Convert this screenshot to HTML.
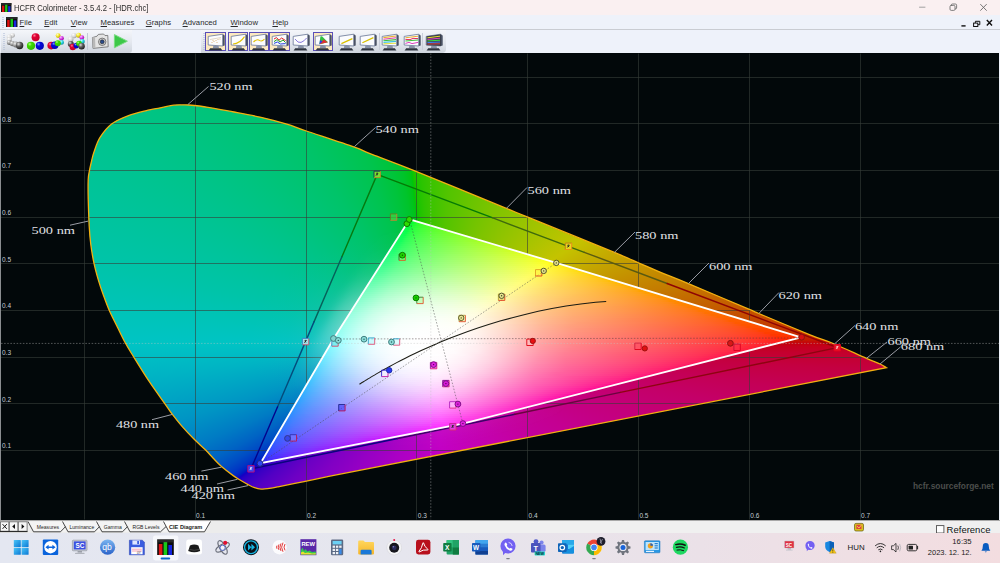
<!DOCTYPE html>
<html lang="en"><head><meta charset="utf-8"><title>HCFR Colorimeter - 3.5.4.2 - [HDR.chc]</title>
<style>
*{box-sizing:border-box}
html,body{margin:0;padding:0}
body{width:1000px;height:563px;overflow:hidden;position:relative;background:#02080a;font-family:"Liberation Sans",sans-serif;}
.abs{position:absolute}
#chartbg{left:0;top:53px;width:1000px;height:467px;background:#02080a}
#leftedge{left:0;top:53px;width:1px;height:467px;background:#8a8d90}
#rightedge{left:998.7px;top:53px;width:1.3px;height:467px;background:#eef2fa}
#conic{left:0;top:0;width:1000px;height:563px;background:radial-gradient(ellipse 80px 52px at 423.1px 343.2px,rgba(196,196,196,0.800) 0%,rgba(196,196,196,0.762) 30%,rgba(196,196,196,0.670) 50%,rgba(196,196,196,0.531) 70%,rgba(196,196,196,0.411) 85%,rgba(196,196,196,0.294) 100%,rgba(196,196,196,0.194) 115%,rgba(196,196,196,0.116) 130%,rgba(196,196,196,0.051) 150%,rgba(196,196,196,0.018) 170%,rgba(196,196,196,0.006) 190%,rgba(196,196,196,0.001) 220%,rgba(196,196,196,0.000) 260%,rgba(196,196,196,0.000) 300%),conic-gradient(from 0deg at 431.1px 343.2px,#3bc400 0.0deg,#52c400 6.5deg,#74c400 20.5deg,#a6c400 44.0deg,#c4c300 55.5deg,#c49600 69.5deg,#c47c00 76.5deg,#c45e00 82.5deg,#c44700 86.0deg,#c43300 88.0deg,#c42500 89.0deg,#c41a00 89.5deg,#c4000b 90.0deg,#c4001d 90.5deg,#c4002e 91.5deg,#c40041 93.5deg,#c40056 97.0deg,#c40068 101.5deg,#c4007d 110.0deg,#c40091 122.0deg,#c400ac 147.5deg,#c300c4 174.5deg,#ab00c4 196.5deg,#9600c4 210.0deg,#8100c4 219.5deg,#6d00c4 225.5deg,#5200c4 230.5deg,#3b00c4 233.0deg,#2d00c4 234.0deg,#2300c4 234.5deg,#1300c4 235.0deg,#001ac4 235.5deg,#0027c4 236.0deg,#0038c4 237.0deg,#004dc4 239.0deg,#0063c4 242.0deg,#007bc4 246.5deg,#0095c4 253.0deg,#00b4c4 263.5deg,#00c4c4 270.0deg,#00c4a9 283.5deg,#00c469 327.5deg,#00c44e 341.0deg,#00c43b 347.0deg,#00c42b 350.5deg,#00c41b 352.5deg,#00c415 353.0deg,#00c40b 353.5deg,#10c400 354.0deg,#1dc400 355.0deg,#2cc400 357.0deg,#3bc400 360.0deg);clip-path:path('M330.0 476.1C325.7 477.0 312.7 479.8 304.0 481.6C295.3 483.4 284.1 485.6 278.0 486.8C271.9 488.0 270.4 488.3 267.6 488.7C264.8 489.1 263.3 489.3 261.1 489.1C258.9 488.9 256.8 488.4 254.6 487.6C252.4 486.9 250.4 485.8 248.1 484.6C245.8 483.4 243.0 481.8 240.5 480.3C238.0 478.8 236.4 477.9 233.2 475.6C230.0 473.3 224.9 469.4 221.5 466.5C218.1 463.6 215.6 460.7 213.0 458.0C210.4 455.3 209.0 453.4 205.9 450.3C202.8 447.2 198.1 443.2 194.2 439.3C190.3 435.4 186.1 431.0 182.5 426.9C178.9 422.8 175.4 418.3 172.4 414.4C169.4 410.5 168.5 408.8 164.6 403.3C160.7 397.8 154.2 389.0 149.0 381.2C143.8 373.4 137.3 362.8 133.4 356.5C129.5 350.2 128.1 348.1 125.5 343.3C122.9 338.5 120.4 333.2 117.7 327.7C115.0 322.2 111.8 316.1 109.3 310.5C106.8 304.9 104.8 298.9 103.0 294.0C101.2 289.1 100.1 286.0 98.6 280.9C97.1 275.8 95.3 269.5 94.0 263.4C92.7 257.3 91.6 250.7 90.8 244.5C90.0 238.3 89.6 233.9 89.2 226.3C88.8 218.7 88.4 206.8 88.2 199.0C88.0 191.2 88.0 184.3 88.2 179.5C88.4 174.7 89.0 173.4 89.5 170.4C90.0 167.4 90.8 164.4 91.5 161.3C92.2 158.2 92.6 155.9 94.0 152.0C95.4 148.1 97.0 142.4 99.9 137.7C102.8 133.0 106.8 127.7 111.6 124.0C116.4 120.3 122.4 117.9 128.5 115.6C134.6 113.3 143.4 111.4 148.0 110.2C152.6 109.0 151.7 109.4 156.0 108.6C160.3 107.8 169.7 105.8 174.0 105.2C178.3 104.6 179.6 104.9 182.0 104.9C184.4 104.9 184.2 104.6 188.5 105.0C192.8 105.4 200.4 106.1 208.0 107.3C215.6 108.5 225.3 110.4 234.0 112.0C242.7 113.6 251.2 115.1 260.0 117.1C268.8 119.1 279.1 121.8 286.8 124.1C294.5 126.4 295.0 127.2 306.3 131.0C317.6 134.8 343.8 143.3 354.4 147.1C365.0 150.9 359.7 149.6 370.0 153.6C380.3 157.6 393.3 162.2 416.0 171.3C438.7 180.4 487.9 200.8 506.4 208.4C524.9 216.0 509.2 209.6 527.2 216.9C545.2 224.2 595.9 244.8 614.4 252.4C632.9 260.1 630.8 259.5 638.4 262.8C646.0 266.1 651.7 268.6 660.0 272.1C668.3 275.6 673.4 277.3 688.4 283.6C703.4 289.9 738.3 304.7 750.0 309.7C761.7 314.7 748.8 309.3 758.8 313.5C768.8 317.7 797.4 329.7 810.0 334.8C822.6 339.9 825.0 340.1 834.4 344.0C843.8 347.9 858.8 355.1 866.4 358.4C874.0 361.7 876.7 362.4 880.0 364.0C883.3 365.6 885.3 367.1 886.4 367.7Z')}
svg{position:absolute;left:0;top:0}
text{white-space:pre}

#title{left:0;top:0;width:1000px;height:15px;background:#faf0f1}
#title .t{position:absolute;left:14px;top:2.7px;font-size:8.35px;color:#2a2a2a;white-space:pre;transform:scaleX(0.915);transform-origin:0 0}
#menu{left:0;top:14.5px;width:1000px;height:15px;background:#eef2fa;border-bottom:1px solid #c9ccd2}
#menu span{position:absolute;top:3.5px;font-size:7.7px;color:#2a2a2a;white-space:pre}
#menu u{text-decoration:underline;text-underline-offset:1px}
#tool{left:0;top:30px;width:1000px;height:23px;background:#eef2fa}
#tb1{left:1px;top:30px;width:131px;height:23px;background:linear-gradient(#f4f6fa,#e3e7ee 55%,#cfd5de);border-radius:0 0 3px 0}
#tb2{left:201px;top:30px;width:245px;height:23px;background:linear-gradient(#f4f6fa,#e3e7ee 55%,#cfd5de);border-radius:0 0 4px 0}
.selb{position:absolute;top:32px;height:19px;background:#fce9c0;border:1px solid #5a4fb8}
#tabs{left:0;top:520px;width:1000px;height:14px;background:#f0f0f0;border-top:1px solid #a8a8a8;overflow:hidden}
#tabs .t{position:absolute;top:3.1px;font-size:5.05px;color:#1e1e22;white-space:pre}
#task{left:0;top:533px;width:1000px;height:30px;background:linear-gradient(90deg,#e4e7f1 0%,#e6e6ee 40%,#ebe1e8 70%,#f3dde0 100%)}
#task .tx{position:absolute;font-size:7.7px;color:#202020;white-space:pre}
</style></head><body>
<div id="chartbg" class="abs"></div>
<div id="conic" class="abs"></div>
<svg width="1000" height="563" viewBox="0 0 1000 563"><defs><linearGradient id="s1" gradientUnits="userSpaceOnUse" x1="408" x2="413" y1="0" y2="0"><stop offset="0" stop-color="#05ff3f"/><stop offset="1" stop-color="#05ff2d"/></linearGradient><linearGradient id="s2" gradientUnits="userSpaceOnUse" x1="406" x2="420" y1="0" y2="0"><stop offset="0" stop-color="#05ff45"/><stop offset="0.429" stop-color="#05ff32"/><stop offset="0.571" stop-color="#05ff29"/><stop offset="0.643" stop-color="#14ff27"/><stop offset="0.857" stop-color="#27ff24"/><stop offset="1" stop-color="#2fff21"/></linearGradient><linearGradient id="s3" gradientUnits="userSpaceOnUse" x1="405" x2="427" y1="0" y2="0"><stop offset="0" stop-color="#06ff49"/><stop offset="0.318" stop-color="#06ff34"/><stop offset="0.364" stop-color="#0aff30"/><stop offset="0.409" stop-color="#17ff2f"/><stop offset="0.591" stop-color="#2dff2b"/><stop offset="1" stop-color="#47ff1f"/></linearGradient><linearGradient id="s4" gradientUnits="userSpaceOnUse" x1="404" x2="434" y1="0" y2="0"><stop offset="0" stop-color="#07ff4d"/><stop offset="0.233" stop-color="#07ff39"/><stop offset="0.3" stop-color="#1aff36"/><stop offset="0.433" stop-color="#2eff32"/><stop offset="0.733" stop-color="#48ff29"/><stop offset="1" stop-color="#58ff1e"/></linearGradient><linearGradient id="s5" gradientUnits="userSpaceOnUse" x1="403" x2="440" y1="0" y2="0"><stop offset="0" stop-color="#08ff50"/><stop offset="0.189" stop-color="#08ff3d"/><stop offset="0.243" stop-color="#1cff3b"/><stop offset="0.351" stop-color="#30ff38"/><stop offset="0.622" stop-color="#4bff30"/><stop offset="1" stop-color="#65ff1f"/></linearGradient><linearGradient id="s6" gradientUnits="userSpaceOnUse" x1="401" x2="447" y1="0" y2="0"><stop offset="0" stop-color="#09ff55"/><stop offset="0.174" stop-color="#0cff42"/><stop offset="0.196" stop-color="#18ff41"/><stop offset="0.304" stop-color="#31ff3e"/><stop offset="0.5" stop-color="#4aff37"/><stop offset="0.913" stop-color="#6cff24"/><stop offset="1" stop-color="#72ff1d"/></linearGradient><linearGradient id="s7" gradientUnits="userSpaceOnUse" x1="400" x2="454" y1="0" y2="0"><stop offset="0" stop-color="#0bff58"/><stop offset="0.13" stop-color="#0bff49"/><stop offset="0.185" stop-color="#21ff46"/><stop offset="0.296" stop-color="#39ff42"/><stop offset="0.519" stop-color="#55ff3a"/><stop offset="0.907" stop-color="#77ff24"/><stop offset="1" stop-color="#7dff1c"/></linearGradient><linearGradient id="s8" gradientUnits="userSpaceOnUse" x1="399" x2="461" y1="0" y2="0"><stop offset="0" stop-color="#0cff5c"/><stop offset="0.113" stop-color="#0dff4d"/><stop offset="0.161" stop-color="#24ff4a"/><stop offset="0.258" stop-color="#3bff47"/><stop offset="0.468" stop-color="#58ff3f"/><stop offset="0.806" stop-color="#79ff2c"/><stop offset="1" stop-color="#88ff1a"/></linearGradient><linearGradient id="s9" gradientUnits="userSpaceOnUse" x1="397" x2="467" y1="0" y2="0"><stop offset="0" stop-color="#0eff60"/><stop offset="0.114" stop-color="#0fff50"/><stop offset="0.129" stop-color="#1aff50"/><stop offset="0.186" stop-color="#2fff4e"/><stop offset="0.314" stop-color="#49ff49"/><stop offset="0.557" stop-color="#69ff3e"/><stop offset="0.929" stop-color="#8cff24"/><stop offset="1" stop-color="#91ff1a"/></linearGradient><linearGradient id="s10" gradientUnits="userSpaceOnUse" x1="396" x2="474" y1="0" y2="0"><stop offset="0" stop-color="#10ff63"/><stop offset="0.0897" stop-color="#10ff56"/><stop offset="0.154" stop-color="#2dff53"/><stop offset="0.269" stop-color="#48ff4e"/><stop offset="0.474" stop-color="#67ff45"/><stop offset="0.821" stop-color="#8cff2f"/><stop offset="0.987" stop-color="#9aff1b"/><stop offset="1" stop-color="#9bff19"/></linearGradient><linearGradient id="s11" gradientUnits="userSpaceOnUse" x1="395" x2="481" y1="0" y2="0"><stop offset="0" stop-color="#11ff66"/><stop offset="0.0814" stop-color="#12ff5a"/><stop offset="0.128" stop-color="#2bff57"/><stop offset="0.256" stop-color="#4cff52"/><stop offset="0.488" stop-color="#70ff47"/><stop offset="0.779" stop-color="#90ff33"/><stop offset="0.942" stop-color="#a0ff21"/><stop offset="1" stop-color="#a5ff16"/></linearGradient><linearGradient id="s12" gradientUnits="userSpaceOnUse" x1="394" x2="487" y1="0" y2="0"><stop offset="0" stop-color="#14ff69"/><stop offset="0.0753" stop-color="#15ff5d"/><stop offset="0.118" stop-color="#2dff5c"/><stop offset="0.226" stop-color="#4bff57"/><stop offset="0.409" stop-color="#6bff4f"/><stop offset="0.763" stop-color="#96ff37"/><stop offset="0.946" stop-color="#a8ff22"/><stop offset="1" stop-color="#adff17"/></linearGradient><linearGradient id="s13" gradientUnits="userSpaceOnUse" x1="392" x2="494" y1="0" y2="0"><stop offset="0" stop-color="#16ff6e"/><stop offset="0.0686" stop-color="#17ff62"/><stop offset="0.137" stop-color="#37ff5f"/><stop offset="0.255" stop-color="#55ff5a"/><stop offset="0.441" stop-color="#75ff50"/><stop offset="0.765" stop-color="#9eff39"/><stop offset="0.931" stop-color="#afff24"/><stop offset="1" stop-color="#b6ff14"/></linearGradient><linearGradient id="s14" gradientUnits="userSpaceOnUse" x1="391" x2="501" y1="0" y2="0"><stop offset="0" stop-color="#18ff71"/><stop offset="0.0636" stop-color="#1aff66"/><stop offset="0.118" stop-color="#36ff63"/><stop offset="0.218" stop-color="#53ff5f"/><stop offset="0.418" stop-color="#78ff55"/><stop offset="0.745" stop-color="#a3ff3c"/><stop offset="0.918" stop-color="#b7ff26"/><stop offset="0.991" stop-color="#bfff14"/><stop offset="1" stop-color="#bfff0f"/></linearGradient><linearGradient id="s15" gradientUnits="userSpaceOnUse" x1="390" x2="508" y1="0" y2="0"><stop offset="0" stop-color="#1bff73"/><stop offset="0.0593" stop-color="#1cff69"/><stop offset="0.102" stop-color="#35ff67"/><stop offset="0.186" stop-color="#50ff64"/><stop offset="0.331" stop-color="#6fff5d"/><stop offset="0.593" stop-color="#97ff4c"/><stop offset="0.839" stop-color="#b6ff33"/><stop offset="0.949" stop-color="#c3ff1f"/><stop offset="1" stop-color="#c8ff0c"/></linearGradient><linearGradient id="s16" gradientUnits="userSpaceOnUse" x1="389" x2="514" y1="0" y2="0"><stop offset="0" stop-color="#1eff76"/><stop offset="0.056" stop-color="#21ff6d"/><stop offset="0.096" stop-color="#38ff6b"/><stop offset="0.192" stop-color="#56ff67"/><stop offset="0.336" stop-color="#75ff60"/><stop offset="0.608" stop-color="#9fff4d"/><stop offset="0.816" stop-color="#baff37"/><stop offset="0.936" stop-color="#c9ff23"/><stop offset="0.984" stop-color="#ceff14"/><stop offset="1" stop-color="#d0ff0c"/></linearGradient><linearGradient id="s17" gradientUnits="userSpaceOnUse" x1="387" x2="521" y1="0" y2="0"><stop offset="0" stop-color="#21ff7b"/><stop offset="0.0522" stop-color="#22ff71"/><stop offset="0.104" stop-color="#3eff6f"/><stop offset="0.194" stop-color="#5aff6b"/><stop offset="0.343" stop-color="#7bff64"/><stop offset="0.627" stop-color="#a8ff4e"/><stop offset="0.836" stop-color="#c4ff36"/><stop offset="0.948" stop-color="#d3ff1f"/><stop offset="0.993" stop-color="#d8ff0c"/><stop offset="1" stop-color="#d9ff0c"/></linearGradient><linearGradient id="s18" gradientUnits="userSpaceOnUse" x1="386" x2="528" y1="0" y2="0"><stop offset="0" stop-color="#24ff7e"/><stop offset="0.0493" stop-color="#26ff75"/><stop offset="0.106" stop-color="#44ff73"/><stop offset="0.204" stop-color="#62ff6f"/><stop offset="0.373" stop-color="#86ff65"/><stop offset="0.655" stop-color="#b3ff4e"/><stop offset="0.859" stop-color="#cfff33"/><stop offset="0.951" stop-color="#dbff1d"/><stop offset="0.986" stop-color="#e0ff0b"/><stop offset="1" stop-color="#e2ff0b"/></linearGradient><linearGradient id="s19" gradientUnits="userSpaceOnUse" x1="385" x2="535" y1="0" y2="0"><stop offset="0" stop-color="#27ff81"/><stop offset="0.0467" stop-color="#2bff79"/><stop offset="0.1" stop-color="#47ff77"/><stop offset="0.233" stop-color="#6fff71"/><stop offset="0.433" stop-color="#96ff65"/><stop offset="0.72" stop-color="#c3ff48"/><stop offset="0.88" stop-color="#daff2f"/><stop offset="0.96" stop-color="#e5ff17"/><stop offset="0.98" stop-color="#e8ff0b"/><stop offset="1" stop-color="#ebff0a"/></linearGradient><linearGradient id="s20" gradientUnits="userSpaceOnUse" x1="383" x2="541" y1="0" y2="0"><stop offset="0" stop-color="#2bff85"/><stop offset="0.0443" stop-color="#2dff7d"/><stop offset="0.101" stop-color="#4aff7b"/><stop offset="0.215" stop-color="#6eff76"/><stop offset="0.411" stop-color="#97ff6a"/><stop offset="0.677" stop-color="#c3ff50"/><stop offset="0.854" stop-color="#ddff36"/><stop offset="0.937" stop-color="#e9ff21"/><stop offset="0.968" stop-color="#eeff13"/><stop offset="0.981" stop-color="#f0ff0a"/><stop offset="1" stop-color="#f3ff09"/></linearGradient><linearGradient id="s21" gradientUnits="userSpaceOnUse" x1="382" x2="548" y1="0" y2="0"><stop offset="0" stop-color="#2eff88"/><stop offset="0.0422" stop-color="#31ff81"/><stop offset="0.0904" stop-color="#4bff7f"/><stop offset="0.199" stop-color="#6fff7b"/><stop offset="0.367" stop-color="#94ff71"/><stop offset="0.602" stop-color="#bdff5b"/><stop offset="0.819" stop-color="#e0ff3d"/><stop offset="0.916" stop-color="#efff27"/><stop offset="0.958" stop-color="#f5ff16"/><stop offset="0.976" stop-color="#f8ff09"/><stop offset="1" stop-color="#fbff08"/></linearGradient><linearGradient id="s22" gradientUnits="userSpaceOnUse" x1="381" x2="555" y1="0" y2="0"><stop offset="0" stop-color="#32ff8b"/><stop offset="0.0402" stop-color="#36ff84"/><stop offset="0.0977" stop-color="#54ff83"/><stop offset="0.201" stop-color="#75ff7f"/><stop offset="0.385" stop-color="#9dff74"/><stop offset="0.661" stop-color="#cdff56"/><stop offset="0.845" stop-color="#ecff39"/><stop offset="0.925" stop-color="#f8ff24"/><stop offset="0.96" stop-color="#feff12"/><stop offset="0.971" stop-color="#fffe08"/><stop offset="1" stop-color="#fffa07"/></linearGradient><linearGradient id="s23" gradientUnits="userSpaceOnUse" x1="380" x2="561" y1="0" y2="0"><stop offset="0" stop-color="#36ff8e"/><stop offset="0.0387" stop-color="#3bff88"/><stop offset="0.0884" stop-color="#55ff87"/><stop offset="0.182" stop-color="#75ff84"/><stop offset="0.348" stop-color="#9bff7b"/><stop offset="0.597" stop-color="#c8ff61"/><stop offset="0.829" stop-color="#f0ff3e"/><stop offset="0.923" stop-color="#fffe26"/><stop offset="0.961" stop-color="#fff811"/><stop offset="0.972" stop-color="#fff608"/><stop offset="1" stop-color="#fff206"/></linearGradient><linearGradient id="s24" gradientUnits="userSpaceOnUse" x1="378" x2="568" y1="0" y2="0"><stop offset="0" stop-color="#3aff93"/><stop offset="0.0368" stop-color="#3eff8c"/><stop offset="0.0947" stop-color="#5bff8b"/><stop offset="0.184" stop-color="#7aff89"/><stop offset="0.368" stop-color="#a4ff7d"/><stop offset="0.595" stop-color="#cdff64"/><stop offset="0.816" stop-color="#f5ff41"/><stop offset="0.879" stop-color="#fffe33"/><stop offset="0.942" stop-color="#fff31b"/><stop offset="0.968" stop-color="#ffef07"/><stop offset="1" stop-color="#ffea05"/></linearGradient><linearGradient id="s25" gradientUnits="userSpaceOnUse" x1="377" x2="575" y1="0" y2="0"><stop offset="0" stop-color="#3eff96"/><stop offset="0.0404" stop-color="#46ff90"/><stop offset="0.111" stop-color="#68ff8f"/><stop offset="0.232" stop-color="#8cff8b"/><stop offset="0.414" stop-color="#b2ff7d"/><stop offset="0.677" stop-color="#e3ff5a"/><stop offset="0.833" stop-color="#fffe3e"/><stop offset="0.929" stop-color="#ffed20"/><stop offset="0.955" stop-color="#ffe910"/><stop offset="0.965" stop-color="#ffe806"/><stop offset="1" stop-color="#ffe304"/></linearGradient><linearGradient id="s26" gradientUnits="userSpaceOnUse" x1="376" x2="581" y1="0" y2="0"><stop offset="0" stop-color="#43ff99"/><stop offset="0.039" stop-color="#4bff94"/><stop offset="0.0976" stop-color="#68ff94"/><stop offset="0.2" stop-color="#89ff91"/><stop offset="0.366" stop-color="#aeff86"/><stop offset="0.585" stop-color="#d7ff6a"/><stop offset="0.795" stop-color="#fffe48"/><stop offset="0.917" stop-color="#ffe825"/><stop offset="0.951" stop-color="#ffe314"/><stop offset="0.966" stop-color="#ffe105"/><stop offset="1" stop-color="#ffdc04"/></linearGradient><linearGradient id="s27" gradientUnits="userSpaceOnUse" x1="375" x2="588" y1="0" y2="0"><stop offset="0" stop-color="#47ff9d"/><stop offset="0.0329" stop-color="#4eff98"/><stop offset="0.0892" stop-color="#6aff98"/><stop offset="0.178" stop-color="#89ff97"/><stop offset="0.329" stop-color="#acff8e"/><stop offset="0.521" stop-color="#d1ff76"/><stop offset="0.756" stop-color="#fffe50"/><stop offset="0.887" stop-color="#ffe62e"/><stop offset="0.944" stop-color="#ffdd16"/><stop offset="0.962" stop-color="#ffda04"/><stop offset="1" stop-color="#ffd603"/></linearGradient><linearGradient id="s28" gradientUnits="userSpaceOnUse" x1="373" x2="594" y1="0" y2="0"><stop offset="0" stop-color="#4bffa1"/><stop offset="0.0362" stop-color="#53ff9c"/><stop offset="0.0905" stop-color="#6fff9d"/><stop offset="0.176" stop-color="#8dff9c"/><stop offset="0.33" stop-color="#b0ff93"/><stop offset="0.525" stop-color="#d6ff79"/><stop offset="0.729" stop-color="#fffd57"/><stop offset="0.891" stop-color="#ffdf2d"/><stop offset="0.941" stop-color="#ffd719"/><stop offset="0.955" stop-color="#ffd50e"/><stop offset="0.964" stop-color="#ffd404"/><stop offset="1" stop-color="#ffd003"/></linearGradient><linearGradient id="s29" gradientUnits="userSpaceOnUse" x1="372" x2="601" y1="0" y2="0"><stop offset="0" stop-color="#4fffa4"/><stop offset="0.0306" stop-color="#56ffa0"/><stop offset="0.0917" stop-color="#76ffa1"/><stop offset="0.188" stop-color="#96ffa1"/><stop offset="0.336" stop-color="#b7ff97"/><stop offset="0.546" stop-color="#e0ff78"/><stop offset="0.694" stop-color="#fffd5f"/><stop offset="0.882" stop-color="#ffda2f"/><stop offset="0.934" stop-color="#ffd21b"/><stop offset="0.952" stop-color="#ffcf0e"/><stop offset="0.961" stop-color="#ffce03"/><stop offset="1" stop-color="#ffc902"/></linearGradient><linearGradient id="s30" gradientUnits="userSpaceOnUse" x1="371" x2="607" y1="0" y2="0"><stop offset="0" stop-color="#54ffa7"/><stop offset="0.0297" stop-color="#5cffa4"/><stop offset="0.089" stop-color="#7bffa6"/><stop offset="0.178" stop-color="#99ffa6"/><stop offset="0.309" stop-color="#b7ff9e"/><stop offset="0.445" stop-color="#d0ff8c"/><stop offset="0.665" stop-color="#fffd66"/><stop offset="0.856" stop-color="#ffd837"/><stop offset="0.932" stop-color="#ffcc1c"/><stop offset="0.953" stop-color="#ffc90e"/><stop offset="0.962" stop-color="#ffc802"/><stop offset="1" stop-color="#ffc402"/></linearGradient><linearGradient id="s31" gradientUnits="userSpaceOnUse" x1="369" x2="614" y1="0" y2="0"><stop offset="0" stop-color="#58ffab"/><stop offset="0.0327" stop-color="#61ffa8"/><stop offset="0.0857" stop-color="#7effaa"/><stop offset="0.171" stop-color="#9cffab"/><stop offset="0.29" stop-color="#b8ffa5"/><stop offset="0.42" stop-color="#d0ff94"/><stop offset="0.637" stop-color="#fffd6d"/><stop offset="0.824" stop-color="#ffd73e"/><stop offset="0.914" stop-color="#ffc923"/><stop offset="0.943" stop-color="#ffc515"/><stop offset="0.959" stop-color="#ffc202"/><stop offset="1" stop-color="#ffbe01"/></linearGradient><linearGradient id="s32" gradientUnits="userSpaceOnUse" x1="368" x2="621" y1="0" y2="0"><stop offset="0" stop-color="#5cffaf"/><stop offset="0.0316" stop-color="#67ffad"/><stop offset="0.107" stop-color="#8dffb0"/><stop offset="0.19" stop-color="#a7ffb0"/><stop offset="0.304" stop-color="#c0ffa9"/><stop offset="0.462" stop-color="#deff90"/><stop offset="0.609" stop-color="#fffd74"/><stop offset="0.794" stop-color="#ffd645"/><stop offset="0.905" stop-color="#ffc426"/><stop offset="0.945" stop-color="#ffbf11"/><stop offset="0.957" stop-color="#ffbd02"/><stop offset="1" stop-color="#ffb801"/></linearGradient><linearGradient id="s33" gradientUnits="userSpaceOnUse" x1="367" x2="627" y1="0" y2="0"><stop offset="0" stop-color="#61ffb2"/><stop offset="0.0269" stop-color="#6affb0"/><stop offset="0.104" stop-color="#92ffb4"/><stop offset="0.2" stop-color="#b0ffb5"/><stop offset="0.312" stop-color="#c6ffad"/><stop offset="0.473" stop-color="#e5ff91"/><stop offset="0.585" stop-color="#fffe7b"/><stop offset="0.754" stop-color="#ffd84f"/><stop offset="0.9" stop-color="#ffc028"/><stop offset="0.942" stop-color="#ffba14"/><stop offset="0.95" stop-color="#ffb90d"/><stop offset="0.958" stop-color="#ffb801"/><stop offset="1" stop-color="#ffb301"/></linearGradient><linearGradient id="s34" gradientUnits="userSpaceOnUse" x1="366" x2="634" y1="0" y2="0"><stop offset="0" stop-color="#66ffb6"/><stop offset="0.0261" stop-color="#6fffb4"/><stop offset="0.101" stop-color="#97ffb9"/><stop offset="0.183" stop-color="#b1ffbb"/><stop offset="0.295" stop-color="#c8ffb4"/><stop offset="0.429" stop-color="#e0ff9d"/><stop offset="0.563" stop-color="#fffd80"/><stop offset="0.713" stop-color="#ffda58"/><stop offset="0.892" stop-color="#ffbb2a"/><stop offset="0.94" stop-color="#ffb414"/><stop offset="0.948" stop-color="#ffb30d"/><stop offset="0.955" stop-color="#ffb201"/><stop offset="1" stop-color="#ffae00"/></linearGradient><linearGradient id="s35" gradientUnits="userSpaceOnUse" x1="364" x2="640" y1="0" y2="0"><stop offset="0" stop-color="#69ffb9"/><stop offset="0.029" stop-color="#74ffb8"/><stop offset="0.101" stop-color="#9cffbd"/><stop offset="0.188" stop-color="#b8ffc0"/><stop offset="0.304" stop-color="#ceffb8"/><stop offset="0.449" stop-color="#e9ff9d"/><stop offset="0.543" stop-color="#fffd87"/><stop offset="0.707" stop-color="#ffd659"/><stop offset="0.888" stop-color="#ffb72c"/><stop offset="0.938" stop-color="#ffb016"/><stop offset="0.949" stop-color="#ffae0c"/><stop offset="0.957" stop-color="#ffad01"/><stop offset="1" stop-color="#ffa900"/></linearGradient><linearGradient id="s36" gradientUnits="userSpaceOnUse" x1="363" x2="647" y1="0" y2="0"><stop offset="0" stop-color="#6dffbc"/><stop offset="0.0317" stop-color="#7cffbc"/><stop offset="0.0951" stop-color="#9fffc1"/><stop offset="0.173" stop-color="#baffc5"/><stop offset="0.285" stop-color="#cfffbf"/><stop offset="0.412" stop-color="#e5ffa8"/><stop offset="0.521" stop-color="#fffd8e"/><stop offset="0.651" stop-color="#ffdc66"/><stop offset="0.845" stop-color="#ffb837"/><stop offset="0.919" stop-color="#ffad1f"/><stop offset="0.944" stop-color="#ffaa10"/><stop offset="0.954" stop-color="#ffa801"/><stop offset="1" stop-color="#ffa400"/></linearGradient><linearGradient id="s37" gradientUnits="userSpaceOnUse" x1="362" x2="653" y1="0" y2="0"><stop offset="0" stop-color="#71ffc0"/><stop offset="0.0241" stop-color="#7cffbf"/><stop offset="0.0928" stop-color="#a4ffc6"/><stop offset="0.162" stop-color="#bcffc9"/><stop offset="0.254" stop-color="#cfffc7"/><stop offset="0.354" stop-color="#deffb8"/><stop offset="0.485" stop-color="#fcff9a"/><stop offset="0.515" stop-color="#fff990"/><stop offset="0.639" stop-color="#ffda6a"/><stop offset="0.814" stop-color="#ffb83f"/><stop offset="0.914" stop-color="#ffa922"/><stop offset="0.945" stop-color="#ffa510"/><stop offset="0.955" stop-color="#ffa300"/><stop offset="1" stop-color="#ff9f00"/></linearGradient><linearGradient id="s38" gradientUnits="userSpaceOnUse" x1="361" x2="660" y1="0" y2="0"><stop offset="0" stop-color="#75ffc3"/><stop offset="0.0268" stop-color="#83ffc3"/><stop offset="0.0903" stop-color="#a9ffca"/><stop offset="0.167" stop-color="#c4ffce"/><stop offset="0.261" stop-color="#d5ffcb"/><stop offset="0.368" stop-color="#e5ffb9"/><stop offset="0.482" stop-color="#fffd9c"/><stop offset="0.619" stop-color="#ffd96e"/><stop offset="0.789" stop-color="#ffb745"/><stop offset="0.896" stop-color="#ffa627"/><stop offset="0.936" stop-color="#ffa115"/><stop offset="0.946" stop-color="#ff9f0c"/><stop offset="0.953" stop-color="#ff9e00"/><stop offset="1" stop-color="#ff9a00"/></linearGradient><linearGradient id="s39" gradientUnits="userSpaceOnUse" x1="359" x2="667" y1="0" y2="0"><stop offset="0" stop-color="#78ffc6"/><stop offset="0.0325" stop-color="#8affc7"/><stop offset="0.0877" stop-color="#acffcd"/><stop offset="0.153" stop-color="#c4ffd2"/><stop offset="0.224" stop-color="#d4ffd2"/><stop offset="0.302" stop-color="#deffca"/><stop offset="0.416" stop-color="#f3ffb1"/><stop offset="0.464" stop-color="#fffda4"/><stop offset="0.578" stop-color="#ffde7a"/><stop offset="0.708" stop-color="#ffc157"/><stop offset="0.864" stop-color="#ffa631"/><stop offset="0.922" stop-color="#ff9e1c"/><stop offset="0.942" stop-color="#ff9b0f"/><stop offset="0.951" stop-color="#ff9a00"/><stop offset="1" stop-color="#ff9500"/></linearGradient><linearGradient id="s40" gradientUnits="userSpaceOnUse" x1="358" x2="673" y1="0" y2="0"><stop offset="0" stop-color="#7cffc9"/><stop offset="0.0254" stop-color="#8affca"/><stop offset="0.0889" stop-color="#b2ffd1"/><stop offset="0.156" stop-color="#cbffd7"/><stop offset="0.248" stop-color="#dcffd5"/><stop offset="0.343" stop-color="#e8ffc6"/><stop offset="0.438" stop-color="#feffae"/><stop offset="0.568" stop-color="#ffdb7d"/><stop offset="0.683" stop-color="#ffc15d"/><stop offset="0.873" stop-color="#ffa02f"/><stop offset="0.927" stop-color="#ff981a"/><stop offset="0.946" stop-color="#ff960b"/><stop offset="0.952" stop-color="#ff9500"/><stop offset="1" stop-color="#ff9100"/></linearGradient><linearGradient id="s41" gradientUnits="userSpaceOnUse" x1="357" x2="680" y1="0" y2="0"><stop offset="0" stop-color="#7fffcc"/><stop offset="0.031" stop-color="#93ffce"/><stop offset="0.0836" stop-color="#b5ffd5"/><stop offset="0.152" stop-color="#cfffdb"/><stop offset="0.241" stop-color="#dfffda"/><stop offset="0.341" stop-color="#ebffca"/><stop offset="0.433" stop-color="#fffdb1"/><stop offset="0.545" stop-color="#ffdc84"/><stop offset="0.647" stop-color="#ffc365"/><stop offset="0.842" stop-color="#ffa037"/><stop offset="0.92" stop-color="#ff951d"/><stop offset="0.941" stop-color="#ff920f"/><stop offset="0.95" stop-color="#ff9000"/><stop offset="1" stop-color="#ff8c00"/></linearGradient><linearGradient id="s42" gradientUnits="userSpaceOnUse" x1="355" x2="686" y1="0" y2="0"><stop offset="0" stop-color="#81ffce"/><stop offset="0.0332" stop-color="#97ffd1"/><stop offset="0.0846" stop-color="#b9ffd8"/><stop offset="0.145" stop-color="#d1ffde"/><stop offset="0.211" stop-color="#dfffe0"/><stop offset="0.305" stop-color="#e9ffd6"/><stop offset="0.396" stop-color="#faffc0"/><stop offset="0.423" stop-color="#fffcb6"/><stop offset="0.55" stop-color="#ffd682"/><stop offset="0.656" stop-color="#ffbd63"/><stop offset="0.84" stop-color="#ff9c38"/><stop offset="0.921" stop-color="#ff901d"/><stop offset="0.943" stop-color="#ff8d0f"/><stop offset="0.952" stop-color="#ff8c00"/><stop offset="1" stop-color="#ff8800"/></linearGradient><linearGradient id="s43" gradientUnits="userSpaceOnUse" x1="354" x2="693" y1="0" y2="0"><stop offset="0" stop-color="#84ffd1"/><stop offset="0.0324" stop-color="#9bffd4"/><stop offset="0.0826" stop-color="#bdffdb"/><stop offset="0.142" stop-color="#d5ffe2"/><stop offset="0.215" stop-color="#e4ffe3"/><stop offset="0.289" stop-color="#ebffdc"/><stop offset="0.383" stop-color="#fbffc6"/><stop offset="0.407" stop-color="#fffcbe"/><stop offset="0.528" stop-color="#ffd789"/><stop offset="0.625" stop-color="#ffbe6a"/><stop offset="0.835" stop-color="#ff9839"/><stop offset="0.923" stop-color="#ff8b1b"/><stop offset="0.941" stop-color="#ff880e"/><stop offset="0.944" stop-color="#ff880b"/><stop offset="0.947" stop-color="#ff8803"/><stop offset="0.956" stop-color="#ff8700"/><stop offset="1" stop-color="#ff8300"/></linearGradient><linearGradient id="s44" gradientUnits="userSpaceOnUse" x1="353" x2="700" y1="0" y2="0"><stop offset="0" stop-color="#87ffd4"/><stop offset="0.0288" stop-color="#9cffd6"/><stop offset="0.0865" stop-color="#c4ffdf"/><stop offset="0.144" stop-color="#daffe6"/><stop offset="0.21" stop-color="#e7ffe7"/><stop offset="0.285" stop-color="#eeffe0"/><stop offset="0.354" stop-color="#f8ffd0"/><stop offset="0.389" stop-color="#fffdc6"/><stop offset="0.527" stop-color="#ffd388"/><stop offset="0.62" stop-color="#ffbb6b"/><stop offset="0.793" stop-color="#ff9a43"/><stop offset="0.902" stop-color="#ff8924"/><stop offset="0.934" stop-color="#ff8513"/><stop offset="0.942" stop-color="#ff830a"/><stop offset="0.948" stop-color="#ff8300"/><stop offset="1" stop-color="#ff7f00"/></linearGradient><linearGradient id="s45" gradientUnits="userSpaceOnUse" x1="352" x2="706" y1="0" y2="0"><stop offset="0" stop-color="#8affd6"/><stop offset="0.0254" stop-color="#9dffd9"/><stop offset="0.065" stop-color="#bbffdf"/><stop offset="0.11" stop-color="#d3ffe5"/><stop offset="0.167" stop-color="#e4ffea"/><stop offset="0.243" stop-color="#edffe9"/><stop offset="0.336" stop-color="#f7ffd8"/><stop offset="0.379" stop-color="#fffdcb"/><stop offset="0.517" stop-color="#ffd18c"/><stop offset="0.596" stop-color="#ffbc71"/><stop offset="0.749" stop-color="#ff9d4d"/><stop offset="0.879" stop-color="#ff882c"/><stop offset="0.929" stop-color="#ff8117"/><stop offset="0.944" stop-color="#ff7f0a"/><stop offset="0.949" stop-color="#ff7e00"/><stop offset="1" stop-color="#ff7a00"/></linearGradient><linearGradient id="s46" gradientUnits="userSpaceOnUse" x1="350" x2="713" y1="0" y2="0"><stop offset="0" stop-color="#8bffd9"/><stop offset="0.0275" stop-color="#a0ffdb"/><stop offset="0.0689" stop-color="#c1ffe2"/><stop offset="0.127" stop-color="#ddffea"/><stop offset="0.19" stop-color="#ebffee"/><stop offset="0.275" stop-color="#f2ffe8"/><stop offset="0.353" stop-color="#fdffd7"/><stop offset="0.419" stop-color="#ffedb9"/><stop offset="0.515" stop-color="#ffcd8c"/><stop offset="0.606" stop-color="#ffb56e"/><stop offset="0.774" stop-color="#ff9447"/><stop offset="0.887" stop-color="#ff8229"/><stop offset="0.931" stop-color="#ff7c15"/><stop offset="0.942" stop-color="#ff7a0a"/><stop offset="0.945" stop-color="#ff7a02"/><stop offset="1" stop-color="#ff7600"/></linearGradient><linearGradient id="s47" gradientUnits="userSpaceOnUse" x1="349" x2="719" y1="0" y2="0"><stop offset="0" stop-color="#8dffdb"/><stop offset="0.0216" stop-color="#9effdd"/><stop offset="0.0649" stop-color="#c2ffe4"/><stop offset="0.119" stop-color="#deffec"/><stop offset="0.181" stop-color="#edfff1"/><stop offset="0.268" stop-color="#f4ffec"/><stop offset="0.338" stop-color="#fdffdd"/><stop offset="0.37" stop-color="#fff9d1"/><stop offset="0.505" stop-color="#ffcc8f"/><stop offset="0.597" stop-color="#ffb270"/><stop offset="0.835" stop-color="#ff8638"/><stop offset="0.905" stop-color="#ff7b22"/><stop offset="0.935" stop-color="#ff7713"/><stop offset="0.943" stop-color="#ff760a"/><stop offset="0.946" stop-color="#ff7602"/><stop offset="1" stop-color="#ff7200"/></linearGradient><linearGradient id="s48" gradientUnits="userSpaceOnUse" x1="348" x2="726" y1="0" y2="0"><stop offset="0" stop-color="#8fffdd"/><stop offset="0.0344" stop-color="#adffe2"/><stop offset="0.0794" stop-color="#cfffe9"/><stop offset="0.135" stop-color="#e7fff0"/><stop offset="0.201" stop-color="#f2fff3"/><stop offset="0.275" stop-color="#f7ffed"/><stop offset="0.341" stop-color="#fffdde"/><stop offset="0.437" stop-color="#ffdfaf"/><stop offset="0.513" stop-color="#ffc48b"/><stop offset="0.595" stop-color="#ffae70"/><stop offset="0.807" stop-color="#ff863f"/><stop offset="0.899" stop-color="#ff7824"/><stop offset="0.931" stop-color="#ff7314"/><stop offset="0.942" stop-color="#ff710a"/><stop offset="0.944" stop-color="#ff7101"/><stop offset="1" stop-color="#ff6d00"/></linearGradient><linearGradient id="s49" gradientUnits="userSpaceOnUse" x1="347" x2="732" y1="0" y2="0"><stop offset="0" stop-color="#90ffe0"/><stop offset="0.026" stop-color="#a8ffe3"/><stop offset="0.0675" stop-color="#cbffe9"/><stop offset="0.114" stop-color="#e3fff0"/><stop offset="0.169" stop-color="#f1fff5"/><stop offset="0.257" stop-color="#f7fff2"/><stop offset="0.33" stop-color="#fffee3"/><stop offset="0.413" stop-color="#ffe4bb"/><stop offset="0.501" stop-color="#ffc48f"/><stop offset="0.587" stop-color="#ffac72"/><stop offset="0.764" stop-color="#ff894a"/><stop offset="0.883" stop-color="#ff762a"/><stop offset="0.927" stop-color="#ff6f18"/><stop offset="0.943" stop-color="#ff6d0a"/><stop offset="0.945" stop-color="#ff6c00"/><stop offset="1" stop-color="#ff6900"/></linearGradient><linearGradient id="s50" gradientUnits="userSpaceOnUse" x1="345" x2="739" y1="0" y2="0"><stop offset="0" stop-color="#90ffe2"/><stop offset="0.0254" stop-color="#a7ffe4"/><stop offset="0.0609" stop-color="#c7ffea"/><stop offset="0.102" stop-color="#e0fff1"/><stop offset="0.15" stop-color="#f0fff6"/><stop offset="0.216" stop-color="#f7fff7"/><stop offset="0.297" stop-color="#fcffee"/><stop offset="0.332" stop-color="#fffbe3"/><stop offset="0.414" stop-color="#ffe0ba"/><stop offset="0.5" stop-color="#ffc08f"/><stop offset="0.579" stop-color="#ffa974"/><stop offset="0.784" stop-color="#ff8145"/><stop offset="0.891" stop-color="#ff7027"/><stop offset="0.929" stop-color="#ff6a16"/><stop offset="0.942" stop-color="#ff6809"/><stop offset="0.944" stop-color="#ff6800"/><stop offset="1" stop-color="#ff6400"/></linearGradient><linearGradient id="s51" gradientUnits="userSpaceOnUse" x1="344" x2="746" y1="0" y2="0"><stop offset="0" stop-color="#91ffe4"/><stop offset="0.0249" stop-color="#a9ffe6"/><stop offset="0.0597" stop-color="#c9ffec"/><stop offset="0.0995" stop-color="#e2fff2"/><stop offset="0.147" stop-color="#f2fff7"/><stop offset="0.216" stop-color="#f9fff9"/><stop offset="0.299" stop-color="#feffef"/><stop offset="0.356" stop-color="#fff2d8"/><stop offset="0.488" stop-color="#ffbf93"/><stop offset="0.562" stop-color="#ffa978"/><stop offset="0.719" stop-color="#ff8853"/><stop offset="0.866" stop-color="#ff6f2f"/><stop offset="0.928" stop-color="#ff6516"/><stop offset="0.94" stop-color="#ff6409"/><stop offset="0.943" stop-color="#ff6300"/><stop offset="1" stop-color="#ff6000"/></linearGradient><linearGradient id="s52" gradientUnits="userSpaceOnUse" x1="343" x2="752" y1="0" y2="0"><stop offset="0" stop-color="#92ffe6"/><stop offset="0.0196" stop-color="#a5ffe8"/><stop offset="0.0587" stop-color="#cbffee"/><stop offset="0.103" stop-color="#e6fff4"/><stop offset="0.152" stop-color="#f5fff9"/><stop offset="0.232" stop-color="#fbfff9"/><stop offset="0.298" stop-color="#fffef0"/><stop offset="0.357" stop-color="#ffefd8"/><stop offset="0.479" stop-color="#ffbe96"/><stop offset="0.557" stop-color="#ffa679"/><stop offset="0.711" stop-color="#ff8555"/><stop offset="0.87" stop-color="#ff6a2e"/><stop offset="0.927" stop-color="#ff6117"/><stop offset="0.941" stop-color="#ff5f09"/><stop offset="0.944" stop-color="#ff5e00"/><stop offset="1" stop-color="#ff5b00"/></linearGradient><linearGradient id="s53" gradientUnits="userSpaceOnUse" x1="341" x2="759" y1="0" y2="0"><stop offset="0" stop-color="#90ffe8"/><stop offset="0.0239" stop-color="#a9ffea"/><stop offset="0.0598" stop-color="#ccfff0"/><stop offset="0.0957" stop-color="#e4fff5"/><stop offset="0.134" stop-color="#f3fff9"/><stop offset="0.196" stop-color="#fbfffc"/><stop offset="0.28" stop-color="#fefff6"/><stop offset="0.337" stop-color="#fff3e2"/><stop offset="0.4" stop-color="#ffdcc0"/><stop offset="0.486" stop-color="#ffb892"/><stop offset="0.567" stop-color="#ff9f76"/><stop offset="0.761" stop-color="#ff784a"/><stop offset="0.88" stop-color="#ff642a"/><stop offset="0.928" stop-color="#ff5c15"/><stop offset="0.94" stop-color="#ff5a09"/><stop offset="0.943" stop-color="#ff5a00"/><stop offset="1" stop-color="#ff5700"/></linearGradient><linearGradient id="s54" gradientUnits="userSpaceOnUse" x1="340" x2="765" y1="0" y2="0"><stop offset="0" stop-color="#90ffea"/><stop offset="0.0282" stop-color="#afffed"/><stop offset="0.0612" stop-color="#cffff1"/><stop offset="0.0965" stop-color="#e7fff6"/><stop offset="0.139" stop-color="#f6fffb"/><stop offset="0.2" stop-color="#fcfffd"/><stop offset="0.278" stop-color="#fffff7"/><stop offset="0.334" stop-color="#fff3e4"/><stop offset="0.475" stop-color="#ffb796"/><stop offset="0.546" stop-color="#ffa07c"/><stop offset="0.732" stop-color="#ff7950"/><stop offset="0.866" stop-color="#ff622f"/><stop offset="0.92" stop-color="#ff591b"/><stop offset="0.941" stop-color="#ff5509"/><stop offset="0.944" stop-color="#ff5500"/><stop offset="1" stop-color="#ff5200"/></linearGradient><linearGradient id="s55" gradientUnits="userSpaceOnUse" x1="339" x2="772" y1="0" y2="0"><stop offset="0" stop-color="#90ffec"/><stop offset="0.0231" stop-color="#aaffee"/><stop offset="0.0554" stop-color="#ccfff2"/><stop offset="0.0901" stop-color="#e5fff7"/><stop offset="0.132" stop-color="#f6fffb"/><stop offset="0.196" stop-color="#fdfffd"/><stop offset="0.27" stop-color="#fffff9"/><stop offset="0.326" stop-color="#fff3e7"/><stop offset="0.39" stop-color="#ffd9c4"/><stop offset="0.467" stop-color="#ffb699"/><stop offset="0.533" stop-color="#ff9f7f"/><stop offset="0.714" stop-color="#ff7854"/><stop offset="0.861" stop-color="#ff5d30"/><stop offset="0.917" stop-color="#ff541c"/><stop offset="0.938" stop-color="#ff500c"/><stop offset="0.94" stop-color="#ff5009"/><stop offset="0.942" stop-color="#ff5000"/><stop offset="1" stop-color="#ff4d00"/></linearGradient><linearGradient id="s56" gradientUnits="userSpaceOnUse" x1="338" x2="778" y1="0" y2="0"><stop offset="0" stop-color="#90ffee"/><stop offset="0.0227" stop-color="#aafff0"/><stop offset="0.0545" stop-color="#cdfff4"/><stop offset="0.0909" stop-color="#e7fff8"/><stop offset="0.13" stop-color="#f7fffc"/><stop offset="0.195" stop-color="#fefffe"/><stop offset="0.268" stop-color="#fffefa"/><stop offset="0.323" stop-color="#fff2e8"/><stop offset="0.389" stop-color="#ffd6c4"/><stop offset="0.468" stop-color="#ffb197"/><stop offset="0.543" stop-color="#ff987c"/><stop offset="0.739" stop-color="#ff6f4f"/><stop offset="0.875" stop-color="#ff562c"/><stop offset="0.923" stop-color="#ff4e19"/><stop offset="0.941" stop-color="#ff4b09"/><stop offset="0.943" stop-color="#ff4a00"/><stop offset="1" stop-color="#ff4800"/></linearGradient><linearGradient id="s57" gradientUnits="userSpaceOnUse" x1="336" x2="785" y1="0" y2="0"><stop offset="0" stop-color="#8dfff0"/><stop offset="0.0223" stop-color="#a7fff2"/><stop offset="0.0512" stop-color="#c9fff5"/><stop offset="0.0891" stop-color="#e7fff9"/><stop offset="0.131" stop-color="#f8fffc"/><stop offset="0.189" stop-color="#fefffe"/><stop offset="0.265" stop-color="#fffefb"/><stop offset="0.314" stop-color="#fff4ec"/><stop offset="0.372" stop-color="#ffdbce"/><stop offset="0.454" stop-color="#ffb29d"/><stop offset="0.521" stop-color="#ff9a82"/><stop offset="0.69" stop-color="#ff7459"/><stop offset="0.851" stop-color="#ff5633"/><stop offset="0.913" stop-color="#ff4a1d"/><stop offset="0.935" stop-color="#ff460f"/><stop offset="0.94" stop-color="#ff4509"/><stop offset="0.942" stop-color="#ff4400"/><stop offset="1" stop-color="#ff4200"/></linearGradient><linearGradient id="s58" gradientUnits="userSpaceOnUse" x1="335" x2="792" y1="0" y2="0"><stop offset="0" stop-color="#8cfff2"/><stop offset="0.0153" stop-color="#9efff3"/><stop offset="0.0481" stop-color="#c7fff6"/><stop offset="0.0853" stop-color="#e6fffa"/><stop offset="0.127" stop-color="#f8fffd"/><stop offset="0.179" stop-color="#feffff"/><stop offset="0.258" stop-color="#fffefc"/><stop offset="0.309" stop-color="#fff4ee"/><stop offset="0.368" stop-color="#ffdacf"/><stop offset="0.453" stop-color="#ffae9c"/><stop offset="0.523" stop-color="#ff9581"/><stop offset="0.687" stop-color="#ff705a"/><stop offset="0.86" stop-color="#ff4f30"/><stop offset="0.919" stop-color="#ff431a"/><stop offset="0.937" stop-color="#ff3f0c"/><stop offset="0.941" stop-color="#ff3e00"/><stop offset="1" stop-color="#ff3c00"/></linearGradient><linearGradient id="s59" gradientUnits="userSpaceOnUse" x1="334" x2="798" y1="0" y2="0"><stop offset="0" stop-color="#8bfff5"/><stop offset="0.0151" stop-color="#9dfff5"/><stop offset="0.0431" stop-color="#c2fff7"/><stop offset="0.0797" stop-color="#e3fffa"/><stop offset="0.127" stop-color="#f9fffd"/><stop offset="0.192" stop-color="#ffffff"/><stop offset="0.265" stop-color="#fffdfb"/><stop offset="0.312" stop-color="#fff1ec"/><stop offset="0.373" stop-color="#ffd4cb"/><stop offset="0.444" stop-color="#ffaea0"/><stop offset="0.509" stop-color="#ff9585"/><stop offset="0.668" stop-color="#ff705e"/><stop offset="0.858" stop-color="#ff4a31"/><stop offset="0.918" stop-color="#ff3d1b"/><stop offset="0.938" stop-color="#ff390c"/><stop offset="0.942" stop-color="#ff3800"/><stop offset="1" stop-color="#ff3600"/></linearGradient><linearGradient id="s60" gradientUnits="userSpaceOnUse" x1="333" x2="802" y1="0" y2="0"><stop offset="0" stop-color="#89fff7"/><stop offset="0.0171" stop-color="#9ffff8"/><stop offset="0.0448" stop-color="#c4fff9"/><stop offset="0.0789" stop-color="#e3fffb"/><stop offset="0.126" stop-color="#f9fffe"/><stop offset="0.181" stop-color="#ffffff"/><stop offset="0.26" stop-color="#fffdfc"/><stop offset="0.309" stop-color="#fff1ee"/><stop offset="0.371" stop-color="#ffd3cc"/><stop offset="0.446" stop-color="#ffaa9f"/><stop offset="0.51" stop-color="#ff9185"/><stop offset="0.682" stop-color="#ff695c"/><stop offset="0.866" stop-color="#ff4330"/><stop offset="0.921" stop-color="#ff371b"/><stop offset="0.942" stop-color="#ff310c"/><stop offset="0.947" stop-color="#ff3000"/><stop offset="1" stop-color="#ff2f00"/></linearGradient><linearGradient id="s61" gradientUnits="userSpaceOnUse" x1="331" x2="800" y1="0" y2="0"><stop offset="0" stop-color="#85fff9"/><stop offset="0.0213" stop-color="#a1fffa"/><stop offset="0.0469" stop-color="#c3fffb"/><stop offset="0.0832" stop-color="#e4fffd"/><stop offset="0.128" stop-color="#f9fffe"/><stop offset="0.183" stop-color="#ffffff"/><stop offset="0.26" stop-color="#fffdfd"/><stop offset="0.311" stop-color="#fff1ef"/><stop offset="0.367" stop-color="#ffd6d2"/><stop offset="0.45" stop-color="#ffa7a0"/><stop offset="0.516" stop-color="#ff8e86"/><stop offset="0.678" stop-color="#ff685f"/><stop offset="0.874" stop-color="#ff3f32"/><stop offset="0.936" stop-color="#ff301c"/><stop offset="0.957" stop-color="#ff290e"/><stop offset="0.962" stop-color="#ff2808"/><stop offset="0.964" stop-color="#ff2700"/><stop offset="1" stop-color="#ff2600"/></linearGradient><linearGradient id="s62" gradientUnits="userSpaceOnUse" x1="330" x2="792" y1="0" y2="0"><stop offset="0" stop-color="#83fffc"/><stop offset="0.0152" stop-color="#96fffc"/><stop offset="0.0455" stop-color="#c0fffd"/><stop offset="0.0823" stop-color="#e2fffe"/><stop offset="0.117" stop-color="#f5fffe"/><stop offset="0.162" stop-color="#feffff"/><stop offset="0.266" stop-color="#fffdfd"/><stop offset="0.314" stop-color="#fff2f1"/><stop offset="0.366" stop-color="#ffdad8"/><stop offset="0.45" stop-color="#ffa9a6"/><stop offset="0.502" stop-color="#ff938f"/><stop offset="0.61" stop-color="#ff7672"/><stop offset="0.89" stop-color="#ff3b35"/><stop offset="0.961" stop-color="#ff281e"/><stop offset="0.987" stop-color="#ff1e0e"/><stop offset="0.991" stop-color="#ff1c08"/><stop offset="0.994" stop-color="#ff1b00"/><stop offset="1" stop-color="#ff1b00"/></linearGradient><linearGradient id="s63" gradientUnits="userSpaceOnUse" x1="329" x2="784" y1="0" y2="0"><stop offset="0" stop-color="#81ffff"/><stop offset="0.0154" stop-color="#94ffff"/><stop offset="0.0484" stop-color="#c1ffff"/><stop offset="0.0857" stop-color="#e3ffff"/><stop offset="0.125" stop-color="#f7ffff"/><stop offset="0.171" stop-color="#feffff"/><stop offset="0.273" stop-color="#fffdfd"/><stop offset="0.319" stop-color="#fff2f2"/><stop offset="0.378" stop-color="#ffd6d6"/><stop offset="0.462" stop-color="#ffa6a6"/><stop offset="0.519" stop-color="#ff8e8e"/><stop offset="0.642" stop-color="#ff6f6f"/><stop offset="0.905" stop-color="#ff3738"/><stop offset="0.987" stop-color="#ff1e20"/><stop offset="1" stop-color="#ff171a"/></linearGradient><linearGradient id="s64" gradientUnits="userSpaceOnUse" x1="328" x2="776" y1="0" y2="0"><stop offset="0" stop-color="#7ffdff"/><stop offset="0.0156" stop-color="#92fdff"/><stop offset="0.0513" stop-color="#c2fdff"/><stop offset="0.0915" stop-color="#e5feff"/><stop offset="0.136" stop-color="#f9ffff"/><stop offset="0.194" stop-color="#ffffff"/><stop offset="0.277" stop-color="#fffdfd"/><stop offset="0.324" stop-color="#fff2f3"/><stop offset="0.382" stop-color="#ffd7d9"/><stop offset="0.475" stop-color="#ffa1a4"/><stop offset="0.542" stop-color="#ff878b"/><stop offset="0.723" stop-color="#ff5e63"/><stop offset="0.924" stop-color="#ff323a"/><stop offset="0.989" stop-color="#ff1c29"/><stop offset="1" stop-color="#ff1726"/></linearGradient><linearGradient id="s65" gradientUnits="userSpaceOnUse" x1="327" x2="768" y1="0" y2="0"><stop offset="0" stop-color="#7cfaff"/><stop offset="0.0113" stop-color="#89faff"/><stop offset="0.0408" stop-color="#b3fbff"/><stop offset="0.0771" stop-color="#d7fcff"/><stop offset="0.113" stop-color="#effdff"/><stop offset="0.156" stop-color="#fcfeff"/><stop offset="0.245" stop-color="#ffffff"/><stop offset="0.304" stop-color="#fff9fa"/><stop offset="0.351" stop-color="#ffe9ec"/><stop offset="0.417" stop-color="#ffc5ca"/><stop offset="0.492" stop-color="#ff9ba2"/><stop offset="0.565" stop-color="#ff818a"/><stop offset="0.714" stop-color="#ff6069"/><stop offset="0.934" stop-color="#ff2f3e"/><stop offset="0.995" stop-color="#ff1930"/><stop offset="1" stop-color="#ff162f"/></linearGradient><linearGradient id="s66" gradientUnits="userSpaceOnUse" x1="325" x2="761" y1="0" y2="0"><stop offset="0" stop-color="#77f7ff"/><stop offset="0.0161" stop-color="#8af7ff"/><stop offset="0.0436" stop-color="#b0f8ff"/><stop offset="0.0757" stop-color="#d2faff"/><stop offset="0.117" stop-color="#edfcff"/><stop offset="0.154" stop-color="#fafeff"/><stop offset="0.216" stop-color="#ffffff"/><stop offset="0.294" stop-color="#fffcfd"/><stop offset="0.349" stop-color="#ffedf0"/><stop offset="0.404" stop-color="#ffd1d7"/><stop offset="0.493" stop-color="#ff9da7"/><stop offset="0.56" stop-color="#ff838f"/><stop offset="0.711" stop-color="#ff606e"/><stop offset="0.92" stop-color="#ff3246"/><stop offset="0.986" stop-color="#ff1c39"/><stop offset="1" stop-color="#ff1435"/></linearGradient><linearGradient id="s67" gradientUnits="userSpaceOnUse" x1="324" x2="753" y1="0" y2="0"><stop offset="0" stop-color="#74f4ff"/><stop offset="0.014" stop-color="#84f4ff"/><stop offset="0.0466" stop-color="#b1f6ff"/><stop offset="0.0839" stop-color="#d5f9ff"/><stop offset="0.121" stop-color="#edfbff"/><stop offset="0.161" stop-color="#fafdff"/><stop offset="0.231" stop-color="#ffffff"/><stop offset="0.303" stop-color="#fffbfc"/><stop offset="0.357" stop-color="#ffecf0"/><stop offset="0.424" stop-color="#ffc8d1"/><stop offset="0.508" stop-color="#ff98a6"/><stop offset="0.578" stop-color="#ff7e8e"/><stop offset="0.762" stop-color="#ff5568"/><stop offset="0.93" stop-color="#ff2f4a"/><stop offset="0.991" stop-color="#ff193e"/><stop offset="1" stop-color="#ff133c"/></linearGradient><linearGradient id="s68" gradientUnits="userSpaceOnUse" x1="323" x2="745" y1="0" y2="0"><stop offset="0" stop-color="#71f1ff"/><stop offset="0.0142" stop-color="#81f1ff"/><stop offset="0.0427" stop-color="#a8f3ff"/><stop offset="0.0782" stop-color="#cdf6ff"/><stop offset="0.118" stop-color="#e9faff"/><stop offset="0.166" stop-color="#fafdff"/><stop offset="0.242" stop-color="#ffffff"/><stop offset="0.313" stop-color="#fffafc"/><stop offset="0.37" stop-color="#ffe8ee"/><stop offset="0.431" stop-color="#ffc7d2"/><stop offset="0.512" stop-color="#ff99aa"/><stop offset="0.573" stop-color="#ff8094"/><stop offset="0.699" stop-color="#ff6278"/><stop offset="0.917" stop-color="#ff3251"/><stop offset="0.986" stop-color="#ff1b45"/><stop offset="1" stop-color="#ff1242"/></linearGradient><linearGradient id="s69" gradientUnits="userSpaceOnUse" x1="322" x2="737" y1="0" y2="0"><stop offset="0" stop-color="#6deeff"/><stop offset="0.0169" stop-color="#82efff"/><stop offset="0.0506" stop-color="#aef1ff"/><stop offset="0.0892" stop-color="#d2f5ff"/><stop offset="0.133" stop-color="#edf9ff"/><stop offset="0.183" stop-color="#fbfdff"/><stop offset="0.28" stop-color="#fffeff"/><stop offset="0.342" stop-color="#fff4f8"/><stop offset="0.398" stop-color="#ffdde6"/><stop offset="0.523" stop-color="#ff96ab"/><stop offset="0.586" stop-color="#ff7d95"/><stop offset="0.725" stop-color="#ff5c77"/><stop offset="0.908" stop-color="#ff3457"/><stop offset="0.976" stop-color="#ff1e4c"/><stop offset="1" stop-color="#ff1148"/></linearGradient><linearGradient id="s70" gradientUnits="userSpaceOnUse" x1="321" x2="729" y1="0" y2="0"><stop offset="0" stop-color="#6aebff"/><stop offset="0.0123" stop-color="#77ebff"/><stop offset="0.0417" stop-color="#a0eeff"/><stop offset="0.0833" stop-color="#caf2ff"/><stop offset="0.125" stop-color="#e6f7ff"/><stop offset="0.169" stop-color="#f7fbff"/><stop offset="0.23" stop-color="#fefeff"/><stop offset="0.309" stop-color="#fffbfd"/><stop offset="0.363" stop-color="#ffeef5"/><stop offset="0.419" stop-color="#ffd5e1"/><stop offset="0.532" stop-color="#ff94ac"/><stop offset="0.598" stop-color="#ff7a96"/><stop offset="0.74" stop-color="#ff5978"/><stop offset="0.919" stop-color="#ff315a"/><stop offset="0.983" stop-color="#ff1b50"/><stop offset="1" stop-color="#ff104d"/></linearGradient><linearGradient id="s71" gradientUnits="userSpaceOnUse" x1="320" x2="721" y1="0" y2="0"><stop offset="0" stop-color="#66e8ff"/><stop offset="0.00998" stop-color="#70e8ff"/><stop offset="0.0399" stop-color="#9aeaff"/><stop offset="0.0848" stop-color="#c7efff"/><stop offset="0.13" stop-color="#e5f5ff"/><stop offset="0.175" stop-color="#f6faff"/><stop offset="0.239" stop-color="#fefdff"/><stop offset="0.309" stop-color="#fffbfe"/><stop offset="0.367" stop-color="#ffeef5"/><stop offset="0.419" stop-color="#ffd8e5"/><stop offset="0.544" stop-color="#ff91ad"/><stop offset="0.613" stop-color="#ff7696"/><stop offset="0.788" stop-color="#ff4f74"/><stop offset="0.938" stop-color="#ff2b5c"/><stop offset="0.99" stop-color="#ff1653"/><stop offset="1" stop-color="#ff0e52"/></linearGradient><linearGradient id="s72" gradientUnits="userSpaceOnUse" x1="318" x2="714" y1="0" y2="0"><stop offset="0" stop-color="#60e5ff"/><stop offset="0.0126" stop-color="#6de5ff"/><stop offset="0.0404" stop-color="#93e7ff"/><stop offset="0.0783" stop-color="#bbebff"/><stop offset="0.119" stop-color="#daf1ff"/><stop offset="0.167" stop-color="#f1f7ff"/><stop offset="0.225" stop-color="#fcfcff"/><stop offset="0.308" stop-color="#fffbfe"/><stop offset="0.371" stop-color="#ffeef6"/><stop offset="0.432" stop-color="#ffd4e3"/><stop offset="0.556" stop-color="#ff8ead"/><stop offset="0.626" stop-color="#ff7397"/><stop offset="0.803" stop-color="#ff4b75"/><stop offset="0.934" stop-color="#ff2b60"/><stop offset="0.987" stop-color="#ff1558"/><stop offset="1" stop-color="#ff0956"/></linearGradient><linearGradient id="s73" gradientUnits="userSpaceOnUse" x1="317" x2="706" y1="0" y2="0"><stop offset="0" stop-color="#5ce2ff"/><stop offset="0.0103" stop-color="#66e2ff"/><stop offset="0.0411" stop-color="#90e4ff"/><stop offset="0.0823" stop-color="#bae9ff"/><stop offset="0.123" stop-color="#d9efff"/><stop offset="0.17" stop-color="#eff5ff"/><stop offset="0.237" stop-color="#fcfbff"/><stop offset="0.314" stop-color="#fffafe"/><stop offset="0.378" stop-color="#ffedf6"/><stop offset="0.445" stop-color="#ffd0e2"/><stop offset="0.558" stop-color="#ff90b2"/><stop offset="0.64" stop-color="#ff7098"/><stop offset="0.817" stop-color="#ff4877"/><stop offset="0.949" stop-color="#ff2663"/><stop offset="0.987" stop-color="#ff145d"/><stop offset="0.997" stop-color="#ff0b5b"/><stop offset="1" stop-color="#ff065b"/></linearGradient><linearGradient id="s74" gradientUnits="userSpaceOnUse" x1="316" x2="698" y1="0" y2="0"><stop offset="0" stop-color="#58dfff"/><stop offset="0.0105" stop-color="#62deff"/><stop offset="0.0393" stop-color="#8ae1ff"/><stop offset="0.0838" stop-color="#b7e6ff"/><stop offset="0.131" stop-color="#d9edff"/><stop offset="0.186" stop-color="#f1f5ff"/><stop offset="0.251" stop-color="#fcfaff"/><stop offset="0.327" stop-color="#fff8fe"/><stop offset="0.395" stop-color="#ffe8f4"/><stop offset="0.461" stop-color="#ffcadf"/><stop offset="0.576" stop-color="#ff8ab0"/><stop offset="0.652" stop-color="#ff6d9a"/><stop offset="0.812" stop-color="#ff497c"/><stop offset="0.94" stop-color="#ff2868"/><stop offset="0.982" stop-color="#ff1762"/><stop offset="0.997" stop-color="#ff0860"/><stop offset="1" stop-color="#ff005f"/></linearGradient><linearGradient id="s75" gradientUnits="userSpaceOnUse" x1="315" x2="690" y1="0" y2="0"><stop offset="0" stop-color="#54dbff"/><stop offset="0.0133" stop-color="#63dbff"/><stop offset="0.0427" stop-color="#89deff"/><stop offset="0.0827" stop-color="#b1e2ff"/><stop offset="0.133" stop-color="#d6eaff"/><stop offset="0.187" stop-color="#eef2ff"/><stop offset="0.256" stop-color="#fbf8ff"/><stop offset="0.331" stop-color="#fff7fe"/><stop offset="0.4" stop-color="#ffe7f4"/><stop offset="0.464" stop-color="#ffcbe2"/><stop offset="0.587" stop-color="#ff88b2"/><stop offset="0.672" stop-color="#ff689a"/><stop offset="0.837" stop-color="#ff437c"/><stop offset="0.944" stop-color="#ff266c"/><stop offset="0.984" stop-color="#ff1466"/><stop offset="0.995" stop-color="#ff0a65"/><stop offset="1" stop-color="#ff0064"/></linearGradient><linearGradient id="s76" gradientUnits="userSpaceOnUse" x1="314" x2="682" y1="0" y2="0"><stop offset="0" stop-color="#51d8ff"/><stop offset="0.00815" stop-color="#57d8ff"/><stop offset="0.0299" stop-color="#76d9ff"/><stop offset="0.0707" stop-color="#a2ddff"/><stop offset="0.12" stop-color="#c8e4ff"/><stop offset="0.168" stop-color="#e3ecff"/><stop offset="0.226" stop-color="#f5f4ff"/><stop offset="0.318" stop-color="#fef7ff"/><stop offset="0.383" stop-color="#ffecf9"/><stop offset="0.457" stop-color="#ffd1e7"/><stop offset="0.603" stop-color="#ff83b1"/><stop offset="0.682" stop-color="#ff669c"/><stop offset="0.851" stop-color="#ff3f7e"/><stop offset="0.948" stop-color="#ff246f"/><stop offset="0.984" stop-color="#ff136a"/><stop offset="0.995" stop-color="#ff0769"/><stop offset="0.997" stop-color="#ff0069"/><stop offset="1" stop-color="#ff0069"/></linearGradient><linearGradient id="s77" gradientUnits="userSpaceOnUse" x1="313" x2="674" y1="0" y2="0"><stop offset="0" stop-color="#4dd5ff"/><stop offset="0.00831" stop-color="#54d4ff"/><stop offset="0.0332" stop-color="#76d6ff"/><stop offset="0.0748" stop-color="#a1daff"/><stop offset="0.144" stop-color="#d3e5ff"/><stop offset="0.202" stop-color="#eceeff"/><stop offset="0.28" stop-color="#faf5ff"/><stop offset="0.352" stop-color="#fff2fd"/><stop offset="0.421" stop-color="#ffe1f3"/><stop offset="0.488" stop-color="#ffc4e0"/><stop offset="0.612" stop-color="#ff82b3"/><stop offset="0.706" stop-color="#ff609b"/><stop offset="0.898" stop-color="#ff337b"/><stop offset="0.964" stop-color="#ff1d71"/><stop offset="0.986" stop-color="#ff106e"/><stop offset="0.992" stop-color="#ff096e"/><stop offset="0.994" stop-color="#ff006d"/><stop offset="1" stop-color="#ff006d"/></linearGradient><linearGradient id="s78" gradientUnits="userSpaceOnUse" x1="311" x2="667" y1="0" y2="0"><stop offset="0" stop-color="#47d1ff"/><stop offset="0.00843" stop-color="#4cd1ff"/><stop offset="0.0337" stop-color="#70d2ff"/><stop offset="0.0815" stop-color="#a0d7ff"/><stop offset="0.146" stop-color="#cee1ff"/><stop offset="0.202" stop-color="#e7eaff"/><stop offset="0.261" stop-color="#f6f1ff"/><stop offset="0.351" stop-color="#fff1ff"/><stop offset="0.419" stop-color="#ffe2f5"/><stop offset="0.489" stop-color="#ffc6e3"/><stop offset="0.618" stop-color="#ff82b6"/><stop offset="0.691" stop-color="#ff65a2"/><stop offset="0.862" stop-color="#ff3b84"/><stop offset="0.947" stop-color="#ff2378"/><stop offset="0.98" stop-color="#ff1173"/><stop offset="0.989" stop-color="#ff0572"/><stop offset="0.992" stop-color="#ff0072"/><stop offset="1" stop-color="#ff0071"/></linearGradient><linearGradient id="s79" gradientUnits="userSpaceOnUse" x1="310" x2="659" y1="0" y2="0"><stop offset="0" stop-color="#43ceff"/><stop offset="0.0086" stop-color="#49cdff"/><stop offset="0.0344" stop-color="#6dcfff"/><stop offset="0.0802" stop-color="#9ad3ff"/><stop offset="0.155" stop-color="#cedeff"/><stop offset="0.215" stop-color="#e8e8ff"/><stop offset="0.292" stop-color="#f8efff"/><stop offset="0.361" stop-color="#ffeeff"/><stop offset="0.438" stop-color="#ffdcf3"/><stop offset="0.513" stop-color="#ffbcdf"/><stop offset="0.633" stop-color="#ff7eb7"/><stop offset="0.705" stop-color="#ff62a4"/><stop offset="0.883" stop-color="#ff3685"/><stop offset="0.968" stop-color="#ff1879"/><stop offset="0.986" stop-color="#ff0877"/><stop offset="0.989" stop-color="#ff0076"/><stop offset="1" stop-color="#ff0075"/></linearGradient><linearGradient id="s80" gradientUnits="userSpaceOnUse" x1="309" x2="651" y1="0" y2="0"><stop offset="0" stop-color="#3fcbff"/><stop offset="0.00877" stop-color="#46caff"/><stop offset="0.0351" stop-color="#6acbff"/><stop offset="0.0848" stop-color="#99cfff"/><stop offset="0.155" stop-color="#c9daff"/><stop offset="0.219" stop-color="#e5e4ff"/><stop offset="0.292" stop-color="#f6ecff"/><stop offset="0.371" stop-color="#ffebff"/><stop offset="0.45" stop-color="#ffd8f2"/><stop offset="0.523" stop-color="#ffb9df"/><stop offset="0.658" stop-color="#ff76b4"/><stop offset="0.76" stop-color="#ff539d"/><stop offset="0.924" stop-color="#ff2983"/><stop offset="0.971" stop-color="#ff157d"/><stop offset="0.982" stop-color="#ff0a7b"/><stop offset="0.985" stop-color="#ff007b"/><stop offset="1" stop-color="#ff007a"/></linearGradient><linearGradient id="s81" gradientUnits="userSpaceOnUse" x1="308" x2="643" y1="0" y2="0"><stop offset="0" stop-color="#3bc7ff"/><stop offset="0.00896" stop-color="#44c7ff"/><stop offset="0.0358" stop-color="#67c8ff"/><stop offset="0.0836" stop-color="#93cbff"/><stop offset="0.143" stop-color="#bdd3ff"/><stop offset="0.2" stop-color="#d9dcff"/><stop offset="0.269" stop-color="#efe6ff"/><stop offset="0.361" stop-color="#fde9ff"/><stop offset="0.409" stop-color="#ffe2fb"/><stop offset="0.49" stop-color="#ffcaeb"/><stop offset="0.615" stop-color="#ff8dc6"/><stop offset="0.704" stop-color="#ff66ad"/><stop offset="0.809" stop-color="#ff4799"/><stop offset="0.931" stop-color="#ff2686"/><stop offset="0.973" stop-color="#ff1281"/><stop offset="0.982" stop-color="#ff067f"/><stop offset="0.985" stop-color="#ff017f"/><stop offset="1" stop-color="#ff017e"/></linearGradient><linearGradient id="s82" gradientUnits="userSpaceOnUse" x1="307" x2="635" y1="0" y2="0"><stop offset="0" stop-color="#37c4ff"/><stop offset="0.00915" stop-color="#41c3ff"/><stop offset="0.0335" stop-color="#61c4ff"/><stop offset="0.0823" stop-color="#8ec7ff"/><stop offset="0.165" stop-color="#c4d2ff"/><stop offset="0.232" stop-color="#e0dcff"/><stop offset="0.296" stop-color="#f1e4ff"/><stop offset="0.396" stop-color="#ffe3fe"/><stop offset="0.482" stop-color="#ffcdf0"/><stop offset="0.576" stop-color="#ffa4d7"/><stop offset="0.692" stop-color="#ff6db5"/><stop offset="0.802" stop-color="#ff499e"/><stop offset="0.933" stop-color="#ff258a"/><stop offset="0.97" stop-color="#ff1385"/><stop offset="0.979" stop-color="#ff0984"/><stop offset="0.982" stop-color="#ff0184"/><stop offset="1" stop-color="#ff0182"/></linearGradient><linearGradient id="s83" gradientUnits="userSpaceOnUse" x1="305" x2="627" y1="0" y2="0"><stop offset="0" stop-color="#32c1ff"/><stop offset="0.00621" stop-color="#35c0ff"/><stop offset="0.0311" stop-color="#58c0ff"/><stop offset="0.0745" stop-color="#81c2ff"/><stop offset="0.14" stop-color="#afc9ff"/><stop offset="0.211" stop-color="#d3d4ff"/><stop offset="0.289" stop-color="#ecdeff"/><stop offset="0.382" stop-color="#fce1ff"/><stop offset="0.425" stop-color="#ffdbfc"/><stop offset="0.5" stop-color="#ffc7ee"/><stop offset="0.593" stop-color="#ff9fd6"/><stop offset="0.708" stop-color="#ff6ab6"/><stop offset="0.845" stop-color="#ff3e9b"/><stop offset="0.938" stop-color="#ff228e"/><stop offset="0.966" stop-color="#ff148a"/><stop offset="0.975" stop-color="#ff0b89"/><stop offset="0.978" stop-color="#ff0488"/><stop offset="1" stop-color="#ff0187"/></linearGradient><linearGradient id="s84" gradientUnits="userSpaceOnUse" x1="304" x2="620" y1="0" y2="0"><stop offset="0" stop-color="#2fbeff"/><stop offset="0.00633" stop-color="#32bdff"/><stop offset="0.0253" stop-color="#4ebdff"/><stop offset="0.0633" stop-color="#74beff"/><stop offset="0.133" stop-color="#a6c4ff"/><stop offset="0.206" stop-color="#ccceff"/><stop offset="0.275" stop-color="#e5d7ff"/><stop offset="0.37" stop-color="#f8ddff"/><stop offset="0.43" stop-color="#ffd8fd"/><stop offset="0.513" stop-color="#ffc2ee"/><stop offset="0.62" stop-color="#ff94d2"/><stop offset="0.728" stop-color="#ff64b6"/><stop offset="0.87" stop-color="#ff379b"/><stop offset="0.949" stop-color="#ff1b90"/><stop offset="0.968" stop-color="#ff0d8d"/><stop offset="0.975" stop-color="#ff038d"/><stop offset="1" stop-color="#ff028b"/></linearGradient><linearGradient id="s85" gradientUnits="userSpaceOnUse" x1="303" x2="612" y1="0" y2="0"><stop offset="0" stop-color="#2cbaff"/><stop offset="0.00647" stop-color="#30b9ff"/><stop offset="0.0259" stop-color="#4cb9ff"/><stop offset="0.0744" stop-color="#79bbff"/><stop offset="0.136" stop-color="#a3bfff"/><stop offset="0.22" stop-color="#cdcaff"/><stop offset="0.32" stop-color="#ecd6ff"/><stop offset="0.427" stop-color="#fed6ff"/><stop offset="0.518" stop-color="#ffc0ef"/><stop offset="0.628" stop-color="#ff93d4"/><stop offset="0.757" stop-color="#ff5bb4"/><stop offset="0.922" stop-color="#ff2698"/><stop offset="0.961" stop-color="#ff1293"/><stop offset="0.968" stop-color="#ff0b92"/><stop offset="0.971" stop-color="#ff0491"/><stop offset="1" stop-color="#ff038f"/></linearGradient><linearGradient id="s86" gradientUnits="userSpaceOnUse" x1="302" x2="604" y1="0" y2="0"><stop offset="0" stop-color="#28b7ff"/><stop offset="0.00662" stop-color="#2eb6ff"/><stop offset="0.0232" stop-color="#47b6ff"/><stop offset="0.0629" stop-color="#6db6ff"/><stop offset="0.136" stop-color="#9ebbff"/><stop offset="0.215" stop-color="#c6c4ff"/><stop offset="0.298" stop-color="#e2ceff"/><stop offset="0.391" stop-color="#f6d3ff"/><stop offset="0.457" stop-color="#ffcefd"/><stop offset="0.543" stop-color="#ffb7ec"/><stop offset="0.662" stop-color="#ff86d0"/><stop offset="0.778" stop-color="#ff56b5"/><stop offset="0.93" stop-color="#ff229b"/><stop offset="0.96" stop-color="#ff1197"/><stop offset="0.97" stop-color="#ff0696"/><stop offset="1" stop-color="#ff0493"/></linearGradient><linearGradient id="s87" gradientUnits="userSpaceOnUse" x1="301" x2="596" y1="0" y2="0"><stop offset="0" stop-color="#25b3ff"/><stop offset="0.00339" stop-color="#26b3ff"/><stop offset="0.0169" stop-color="#3db3ff"/><stop offset="0.0508" stop-color="#60b3ff"/><stop offset="0.112" stop-color="#8bb4ff"/><stop offset="0.193" stop-color="#b7bcff"/><stop offset="0.281" stop-color="#d9c6ff"/><stop offset="0.39" stop-color="#f3ceff"/><stop offset="0.471" stop-color="#ffc8fd"/><stop offset="0.563" stop-color="#ffb0eb"/><stop offset="0.698" stop-color="#ff79cb"/><stop offset="0.834" stop-color="#ff44af"/><stop offset="0.936" stop-color="#ff1f9f"/><stop offset="0.959" stop-color="#ff109c"/><stop offset="0.969" stop-color="#ff089a"/><stop offset="1" stop-color="#ff0598"/></linearGradient><linearGradient id="s88" gradientUnits="userSpaceOnUse" x1="300" x2="588" y1="0" y2="0"><stop offset="0" stop-color="#22b0ff"/><stop offset="0.00694" stop-color="#2cb0ff"/><stop offset="0.0278" stop-color="#48afff"/><stop offset="0.0729" stop-color="#6eafff"/><stop offset="0.142" stop-color="#98b2ff"/><stop offset="0.226" stop-color="#c0baff"/><stop offset="0.316" stop-color="#dec4ff"/><stop offset="0.427" stop-color="#f6c8ff"/><stop offset="0.483" stop-color="#ffc3fd"/><stop offset="0.573" stop-color="#ffacec"/><stop offset="0.705" stop-color="#ff79ce"/><stop offset="0.851" stop-color="#ff40b0"/><stop offset="0.938" stop-color="#ff1ea3"/><stop offset="0.958" stop-color="#ff10a0"/><stop offset="0.965" stop-color="#ff0b9f"/><stop offset="1" stop-color="#ff079c"/></linearGradient><linearGradient id="s89" gradientUnits="userSpaceOnUse" x1="298" x2="580" y1="0" y2="0"><stop offset="0" stop-color="#1eadff"/><stop offset="0.00355" stop-color="#1fadff"/><stop offset="0.0213" stop-color="#3bacff"/><stop offset="0.0496" stop-color="#57acff"/><stop offset="0.103" stop-color="#7cacff"/><stop offset="0.191" stop-color="#abb1ff"/><stop offset="0.284" stop-color="#cfbaff"/><stop offset="0.383" stop-color="#eac2ff"/><stop offset="0.486" stop-color="#febfff"/><stop offset="0.578" stop-color="#ffaaef"/><stop offset="0.702" stop-color="#ff7dd4"/><stop offset="0.869" stop-color="#ff3bb2"/><stop offset="0.94" stop-color="#ff1da7"/><stop offset="0.965" stop-color="#ff0ea4"/><stop offset="1" stop-color="#ff0aa0"/></linearGradient><linearGradient id="s90" gradientUnits="userSpaceOnUse" x1="297" x2="572" y1="0" y2="0"><stop offset="0" stop-color="#1caaff"/><stop offset="0.00364" stop-color="#1da9ff"/><stop offset="0.0218" stop-color="#3ba9ff"/><stop offset="0.0582" stop-color="#5ca8ff"/><stop offset="0.131" stop-color="#89a9ff"/><stop offset="0.236" stop-color="#b9afff"/><stop offset="0.345" stop-color="#ddb9ff"/><stop offset="0.455" stop-color="#f4bcff"/><stop offset="0.516" stop-color="#ffb6fe"/><stop offset="0.611" stop-color="#ff9feb"/><stop offset="0.753" stop-color="#ff6bcd"/><stop offset="0.931" stop-color="#ff23ad"/><stop offset="0.96" stop-color="#ff13a9"/><stop offset="1" stop-color="#ff0da5"/></linearGradient><linearGradient id="s91" gradientUnits="userSpaceOnUse" x1="296" x2="565" y1="0" y2="0"><stop offset="0" stop-color="#19a7ff"/><stop offset="0.0223" stop-color="#3aa5ff"/><stop offset="0.0558" stop-color="#58a5ff"/><stop offset="0.119" stop-color="#7fa4ff"/><stop offset="0.219" stop-color="#aea8ff"/><stop offset="0.331" stop-color="#d4b1ff"/><stop offset="0.454" stop-color="#f1b6ff"/><stop offset="0.535" stop-color="#ffaffd"/><stop offset="0.669" stop-color="#ff8be3"/><stop offset="0.888" stop-color="#ff37b8"/><stop offset="0.955" stop-color="#ff17ae"/><stop offset="1" stop-color="#ff0fa9"/></linearGradient><linearGradient id="s92" gradientUnits="userSpaceOnUse" x1="295" x2="557" y1="0" y2="0"><stop offset="0" stop-color="#17a3ff"/><stop offset="0.0153" stop-color="#31a3ff"/><stop offset="0.0458" stop-color="#4fa2ff"/><stop offset="0.107" stop-color="#76a0ff"/><stop offset="0.214" stop-color="#a7a3ff"/><stop offset="0.321" stop-color="#ccaaff"/><stop offset="0.447" stop-color="#ecafff"/><stop offset="0.542" stop-color="#ffaaff"/><stop offset="0.653" stop-color="#ff90ea"/><stop offset="0.809" stop-color="#ff59cb"/><stop offset="0.931" stop-color="#ff26b6"/><stop offset="0.95" stop-color="#ff1cb4"/><stop offset="1" stop-color="#ff13ae"/></linearGradient><linearGradient id="s93" gradientUnits="userSpaceOnUse" x1="294" x2="549" y1="0" y2="0"><stop offset="0" stop-color="#15a0ff"/><stop offset="0.00784" stop-color="#26a0ff"/><stop offset="0.0314" stop-color="#429fff"/><stop offset="0.0824" stop-color="#669dff"/><stop offset="0.184" stop-color="#979dff"/><stop offset="0.306" stop-color="#c3a2ff"/><stop offset="0.463" stop-color="#eba9ff"/><stop offset="0.565" stop-color="#ffa2ff"/><stop offset="0.667" stop-color="#ff8aeb"/><stop offset="0.788" stop-color="#ff63d4"/><stop offset="0.918" stop-color="#ff2fbd"/><stop offset="0.953" stop-color="#ff20b8"/><stop offset="1" stop-color="#ff17b3"/></linearGradient><linearGradient id="s94" gradientUnits="userSpaceOnUse" x1="293" x2="541" y1="0" y2="0"><stop offset="0" stop-color="#169dff"/><stop offset="0.00806" stop-color="#279cff"/><stop offset="0.0323" stop-color="#429bff"/><stop offset="0.0847" stop-color="#659aff"/><stop offset="0.185" stop-color="#9498ff"/><stop offset="0.319" stop-color="#c29dff"/><stop offset="0.488" stop-color="#eca2ff"/><stop offset="0.593" stop-color="#ff99fd"/><stop offset="0.742" stop-color="#ff74e1"/><stop offset="0.891" stop-color="#ff3ec7"/><stop offset="0.944" stop-color="#ff27bf"/><stop offset="1" stop-color="#ff1bb8"/></linearGradient><linearGradient id="s95" gradientUnits="userSpaceOnUse" x1="291" x2="533" y1="0" y2="0"><stop offset="0" stop-color="#109aff"/><stop offset="0.0124" stop-color="#2899ff"/><stop offset="0.0372" stop-color="#4298ff"/><stop offset="0.0868" stop-color="#6296ff"/><stop offset="0.178" stop-color="#8c94ff"/><stop offset="0.314" stop-color="#bb97ff"/><stop offset="0.463" stop-color="#e29bff"/><stop offset="0.574" stop-color="#f897ff"/><stop offset="0.62" stop-color="#ff91fd"/><stop offset="0.752" stop-color="#ff71e4"/><stop offset="0.888" stop-color="#ff42cc"/><stop offset="0.946" stop-color="#ff2bc3"/><stop offset="1" stop-color="#ff1fbd"/></linearGradient><linearGradient id="s96" gradientUnits="userSpaceOnUse" x1="290" x2="525" y1="0" y2="0"><stop offset="0" stop-color="#0e97ff"/><stop offset="0.00851" stop-color="#2296ff"/><stop offset="0.0298" stop-color="#3b95ff"/><stop offset="0.0766" stop-color="#5b93ff"/><stop offset="0.17" stop-color="#8690ff"/><stop offset="0.319" stop-color="#b891ff"/><stop offset="0.485" stop-color="#e294ff"/><stop offset="0.609" stop-color="#fa8eff"/><stop offset="0.643" stop-color="#ff89fd"/><stop offset="0.774" stop-color="#ff6ae5"/><stop offset="0.894" stop-color="#ff42d1"/><stop offset="0.945" stop-color="#ff30c9"/><stop offset="1" stop-color="#ff24c2"/></linearGradient><linearGradient id="s97" gradientUnits="userSpaceOnUse" x1="289" x2="518" y1="0" y2="0"><stop offset="0" stop-color="#1194ff"/><stop offset="0.00873" stop-color="#2493ff"/><stop offset="0.0262" stop-color="#3892ff"/><stop offset="0.0699" stop-color="#5690ff"/><stop offset="0.162" stop-color="#808dff"/><stop offset="0.306" stop-color="#b08bff"/><stop offset="0.476" stop-color="#dc8dff"/><stop offset="0.598" stop-color="#f489ff"/><stop offset="0.664" stop-color="#ff81fd"/><stop offset="0.808" stop-color="#ff5fe3"/><stop offset="0.934" stop-color="#ff35cf"/><stop offset="1" stop-color="#ff27c7"/></linearGradient><linearGradient id="s98" gradientUnits="userSpaceOnUse" x1="288" x2="510" y1="0" y2="0"><stop offset="0" stop-color="#1490ff"/><stop offset="0.00901" stop-color="#2590ff"/><stop offset="0.0315" stop-color="#3c8fff"/><stop offset="0.0811" stop-color="#5b8dff"/><stop offset="0.18" stop-color="#8489ff"/><stop offset="0.342" stop-color="#b686ff"/><stop offset="0.527" stop-color="#e286ff"/><stop offset="0.658" stop-color="#fb7dff"/><stop offset="0.703" stop-color="#ff76fb"/><stop offset="0.833" stop-color="#ff57e4"/><stop offset="0.928" stop-color="#ff39d5"/><stop offset="1" stop-color="#ff2bcc"/></linearGradient><linearGradient id="s99" gradientUnits="userSpaceOnUse" x1="287" x2="502" y1="0" y2="0"><stop offset="0" stop-color="#178dff"/><stop offset="0.014" stop-color="#2c8dff"/><stop offset="0.0419" stop-color="#438bff"/><stop offset="0.0977" stop-color="#6188ff"/><stop offset="0.2" stop-color="#8884ff"/><stop offset="0.367" stop-color="#b881ff"/><stop offset="0.572" stop-color="#e67eff"/><stop offset="0.702" stop-color="#fe72ff"/><stop offset="0.837" stop-color="#ff55e9"/><stop offset="0.921" stop-color="#ff3ddc"/><stop offset="1" stop-color="#ff2ed1"/></linearGradient><linearGradient id="s100" gradientUnits="userSpaceOnUse" x1="286" x2="494" y1="0" y2="0"><stop offset="0" stop-color="#1a8aff"/><stop offset="0.0192" stop-color="#3289ff"/><stop offset="0.0625" stop-color="#4f87ff"/><stop offset="0.168" stop-color="#7b82ff"/><stop offset="0.337" stop-color="#ac7cff"/><stop offset="0.538" stop-color="#da78ff"/><stop offset="0.688" stop-color="#f66fff"/><stop offset="0.745" stop-color="#ff67fe"/><stop offset="0.875" stop-color="#ff49e8"/><stop offset="0.962" stop-color="#ff37dc"/><stop offset="1" stop-color="#ff31d7"/></linearGradient><linearGradient id="s101" gradientUnits="userSpaceOnUse" x1="284" x2="486" y1="0" y2="0"><stop offset="0" stop-color="#1287ff"/><stop offset="0.0099" stop-color="#2487ff"/><stop offset="0.0396" stop-color="#3e85ff"/><stop offset="0.109" stop-color="#6182ff"/><stop offset="0.218" stop-color="#877cff"/><stop offset="0.411" stop-color="#b975ff"/><stop offset="0.644" stop-color="#e96dff"/><stop offset="0.777" stop-color="#ff5dfe"/><stop offset="0.891" stop-color="#ff43eb"/><stop offset="1" stop-color="#ff33dc"/></linearGradient><linearGradient id="s102" gradientUnits="userSpaceOnUse" x1="283" x2="478" y1="0" y2="0"><stop offset="0" stop-color="#1684ff"/><stop offset="0.0154" stop-color="#2b83ff"/><stop offset="0.0513" stop-color="#4581ff"/><stop offset="0.133" stop-color="#697dff"/><stop offset="0.272" stop-color="#9376ff"/><stop offset="0.487" stop-color="#c56eff"/><stop offset="0.697" stop-color="#ed62ff"/><stop offset="0.815" stop-color="#ff52fd"/><stop offset="0.897" stop-color="#ff40f0"/><stop offset="1" stop-color="#ff34e2"/></linearGradient><linearGradient id="s103" gradientUnits="userSpaceOnUse" x1="282" x2="471" y1="0" y2="0"><stop offset="0" stop-color="#1981ff"/><stop offset="0.0159" stop-color="#2c80ff"/><stop offset="0.0582" stop-color="#487eff"/><stop offset="0.138" stop-color="#6979ff"/><stop offset="0.307" stop-color="#9970ff"/><stop offset="0.54" stop-color="#cb66ff"/><stop offset="0.741" stop-color="#ef57ff"/><stop offset="0.847" stop-color="#ff46fd"/><stop offset="0.894" stop-color="#ff3ef6"/><stop offset="1" stop-color="#ff34e7"/></linearGradient><linearGradient id="s104" gradientUnits="userSpaceOnUse" x1="281" x2="462" y1="0" y2="0"><stop offset="0" stop-color="#1b7dff"/><stop offset="0.0166" stop-color="#2d7dff"/><stop offset="0.0552" stop-color="#467bff"/><stop offset="0.144" stop-color="#6976ff"/><stop offset="0.315" stop-color="#976cff"/><stop offset="0.558" stop-color="#c95fff"/><stop offset="0.751" stop-color="#ea50ff"/><stop offset="0.862" stop-color="#fc3fff"/><stop offset="0.906" stop-color="#ff3bfb"/><stop offset="1" stop-color="#ff34ee"/></linearGradient><linearGradient id="s105" gradientUnits="userSpaceOnUse" x1="280" x2="452" y1="0" y2="0"><stop offset="0" stop-color="#1e7aff"/><stop offset="0.0233" stop-color="#3379ff"/><stop offset="0.0872" stop-color="#5376ff"/><stop offset="0.203" stop-color="#786fff"/><stop offset="0.401" stop-color="#a563ff"/><stop offset="0.709" stop-color="#dd4fff"/><stop offset="0.849" stop-color="#f23dff"/><stop offset="0.895" stop-color="#f938ff"/><stop offset="0.948" stop-color="#ff36fd"/><stop offset="1" stop-color="#ff34f6"/></linearGradient><linearGradient id="s106" gradientUnits="userSpaceOnUse" x1="278" x2="442" y1="0" y2="0"><stop offset="0" stop-color="#1877ff"/><stop offset="0.0244" stop-color="#3076ff"/><stop offset="0.0915" stop-color="#5172ff"/><stop offset="0.213" stop-color="#766bff"/><stop offset="0.415" stop-color="#a25fff"/><stop offset="0.738" stop-color="#da47ff"/><stop offset="0.89" stop-color="#f034ff"/><stop offset="1" stop-color="#ff32fe"/></linearGradient><linearGradient id="s107" gradientUnits="userSpaceOnUse" x1="277" x2="432" y1="0" y2="0"><stop offset="0" stop-color="#1a74ff"/><stop offset="0.0194" stop-color="#2c73ff"/><stop offset="0.0581" stop-color="#4271ff"/><stop offset="0.142" stop-color="#606cff"/><stop offset="0.316" stop-color="#8a62ff"/><stop offset="0.594" stop-color="#bc4fff"/><stop offset="0.813" stop-color="#dd39ff"/><stop offset="0.89" stop-color="#e82fff"/><stop offset="1" stop-color="#f82fff"/></linearGradient><linearGradient id="s108" gradientUnits="userSpaceOnUse" x1="276" x2="421" y1="0" y2="0"><stop offset="0" stop-color="#1d70ff"/><stop offset="0.0276" stop-color="#326fff"/><stop offset="0.0966" stop-color="#4f6bff"/><stop offset="0.207" stop-color="#6e65ff"/><stop offset="0.428" stop-color="#9a57ff"/><stop offset="0.738" stop-color="#ca3eff"/><stop offset="0.897" stop-color="#e029ff"/><stop offset="1" stop-color="#ee2bff"/></linearGradient><linearGradient id="s109" gradientUnits="userSpaceOnUse" x1="275" x2="411" y1="0" y2="0"><stop offset="0" stop-color="#1f6dff"/><stop offset="0.0294" stop-color="#336bff"/><stop offset="0.0956" stop-color="#4d68ff"/><stop offset="0.221" stop-color="#6e61ff"/><stop offset="0.441" stop-color="#9753ff"/><stop offset="0.735" stop-color="#c33aff"/><stop offset="0.904" stop-color="#d924ff"/><stop offset="1" stop-color="#e526ff"/></linearGradient><linearGradient id="s110" gradientUnits="userSpaceOnUse" x1="274" x2="401" y1="0" y2="0"><stop offset="0" stop-color="#2169ff"/><stop offset="0.0315" stop-color="#3468ff"/><stop offset="0.11" stop-color="#5064ff"/><stop offset="0.276" stop-color="#765bff"/><stop offset="0.591" stop-color="#a845ff"/><stop offset="0.819" stop-color="#c62cff"/><stop offset="0.898" stop-color="#cf1eff"/><stop offset="1" stop-color="#dc21ff"/></linearGradient><linearGradient id="s111" gradientUnits="userSpaceOnUse" x1="273" x2="391" y1="0" y2="0"><stop offset="0" stop-color="#2365ff"/><stop offset="0.0508" stop-color="#3b63ff"/><stop offset="0.153" stop-color="#595eff"/><stop offset="0.364" stop-color="#8152ff"/><stop offset="0.695" stop-color="#af38ff"/><stop offset="0.856" stop-color="#c222ff"/><stop offset="0.907" stop-color="#c819ff"/><stop offset="1" stop-color="#d31cff"/></linearGradient><linearGradient id="s112" gradientUnits="userSpaceOnUse" x1="271" x2="381" y1="0" y2="0"><stop offset="0" stop-color="#1e62ff"/><stop offset="0.0455" stop-color="#3660ff"/><stop offset="0.145" stop-color="#535bff"/><stop offset="0.336" stop-color="#7751ff"/><stop offset="0.645" stop-color="#a23aff"/><stop offset="0.818" stop-color="#b626ff"/><stop offset="0.909" stop-color="#c014ff"/><stop offset="1" stop-color="#ca17ff"/></linearGradient><linearGradient id="s113" gradientUnits="userSpaceOnUse" x1="270" x2="370" y1="0" y2="0"><stop offset="0" stop-color="#205eff"/><stop offset="0.04" stop-color="#335cff"/><stop offset="0.14" stop-color="#4f58ff"/><stop offset="0.34" stop-color="#734eff"/><stop offset="0.68" stop-color="#9e35ff"/><stop offset="0.85" stop-color="#b020ff"/><stop offset="0.92" stop-color="#b710ff"/><stop offset="1" stop-color="#c012ff"/></linearGradient><linearGradient id="s114" gradientUnits="userSpaceOnUse" x1="269" x2="360" y1="0" y2="0"><stop offset="0" stop-color="#225aff"/><stop offset="0.0769" stop-color="#3e57ff"/><stop offset="0.242" stop-color="#5f4fff"/><stop offset="0.505" stop-color="#8340ff"/><stop offset="0.747" stop-color="#9d2cff"/><stop offset="0.868" stop-color="#a91bff"/><stop offset="0.923" stop-color="#af0cff"/><stop offset="1" stop-color="#b60dff"/></linearGradient><linearGradient id="s115" gradientUnits="userSpaceOnUse" x1="268" x2="350" y1="0" y2="0"><stop offset="0" stop-color="#2456ff"/><stop offset="0.0732" stop-color="#3b53ff"/><stop offset="0.22" stop-color="#584dff"/><stop offset="0.488" stop-color="#7b3fff"/><stop offset="0.78" stop-color="#9927ff"/><stop offset="0.902" stop-color="#a413ff"/><stop offset="0.927" stop-color="#a609ff"/><stop offset="1" stop-color="#ad0aff"/></linearGradient><linearGradient id="s116" gradientUnits="userSpaceOnUse" x1="267" x2="340" y1="0" y2="0"><stop offset="0" stop-color="#2552ff"/><stop offset="0.0822" stop-color="#3c4fff"/><stop offset="0.274" stop-color="#5c47ff"/><stop offset="0.63" stop-color="#8332ff"/><stop offset="0.822" stop-color="#9421ff"/><stop offset="0.904" stop-color="#9b13ff"/><stop offset="0.945" stop-color="#9e06ff"/><stop offset="1" stop-color="#a307ff"/></linearGradient><linearGradient id="s117" gradientUnits="userSpaceOnUse" x1="266" x2="329" y1="0" y2="0"><stop offset="0" stop-color="#274dff"/><stop offset="0.111" stop-color="#3f49ff"/><stop offset="0.302" stop-color="#5a42ff"/><stop offset="0.667" stop-color="#7e2eff"/><stop offset="0.857" stop-color="#8d1dff"/><stop offset="0.937" stop-color="#9210ff"/><stop offset="0.968" stop-color="#9504ff"/><stop offset="1" stop-color="#9705ff"/></linearGradient><linearGradient id="s118" gradientUnits="userSpaceOnUse" x1="264" x2="319" y1="0" y2="0"><stop offset="0" stop-color="#2349ff"/><stop offset="0.0909" stop-color="#3746ff"/><stop offset="0.309" stop-color="#553eff"/><stop offset="0.709" stop-color="#782aff"/><stop offset="0.891" stop-color="#851aff"/><stop offset="0.964" stop-color="#8a0dff"/><stop offset="0.982" stop-color="#8b05ff"/><stop offset="1" stop-color="#8d03ff"/></linearGradient><linearGradient id="s119" gradientUnits="userSpaceOnUse" x1="263" x2="309" y1="0" y2="0"><stop offset="0" stop-color="#2544ff"/><stop offset="0.174" stop-color="#413eff"/><stop offset="0.565" stop-color="#652fff"/><stop offset="0.848" stop-color="#781eff"/><stop offset="0.978" stop-color="#800fff"/><stop offset="1" stop-color="#8109ff"/></linearGradient><linearGradient id="s120" gradientUnits="userSpaceOnUse" x1="262" x2="299" y1="0" y2="0"><stop offset="0" stop-color="#263eff"/><stop offset="0.189" stop-color="#3f39ff"/><stop offset="0.73" stop-color="#6725ff"/><stop offset="0.973" stop-color="#7413ff"/><stop offset="1" stop-color="#7510ff"/></linearGradient><linearGradient id="s121" gradientUnits="userSpaceOnUse" x1="261" x2="289" y1="0" y2="0"><stop offset="0" stop-color="#2738ff"/><stop offset="0.214" stop-color="#3d33ff"/><stop offset="0.75" stop-color="#5d22ff"/><stop offset="1" stop-color="#6814ff"/></linearGradient><linearGradient id="s122" gradientUnits="userSpaceOnUse" x1="260" x2="278" y1="0" y2="0"><stop offset="0" stop-color="#2931ff"/><stop offset="0.611" stop-color="#4a25ff"/><stop offset="1" stop-color="#581aff"/></linearGradient><linearGradient id="s123" gradientUnits="userSpaceOnUse" x1="259" x2="268" y1="0" y2="0"><stop offset="0" stop-color="#2a29ff"/><stop offset="1" stop-color="#451cff"/></linearGradient><clipPath id="cpoly"><polygon points="801.0,337.3 556.3,262.9 409.6,219.3 333.7,338.5 260.5,463.2 462.9,423.6"/></clipPath><clipPath id="cchart"><rect x="1" y="53.5" width="999" height="466"/></clipPath><radialGradient id="halo" gradientUnits="userSpaceOnUse" cx="0" cy="0" r="2.2" gradientTransform="translate(423.1 343.2) scale(80.0 52.0)"><stop offset="0.000" stop-color="#e8fff8" stop-opacity="0.900"/><stop offset="0.273" stop-color="#e8fff8" stop-opacity="0.681"/><stop offset="0.409" stop-color="#e8fff8" stop-opacity="0.417"/><stop offset="0.500" stop-color="#e8fff8" stop-opacity="0.253"/><stop offset="0.591" stop-color="#e8fff8" stop-opacity="0.131"/><stop offset="0.682" stop-color="#e8fff8" stop-opacity="0.057"/><stop offset="0.818" stop-color="#e8fff8" stop-opacity="0.012"/><stop offset="1.000" stop-color="#e8fff8" stop-opacity="0.001"/></radialGradient><filter id="blur4" x="-5%%" y="-5%%" width="110%%" height="110%%"><feGaussianBlur stdDeviation="5"/></filter></defs><g clip-path="url(#cchart)"><g fill="#373d39" fill-opacity="0.6" shape-rendering="crispEdges"><rect x="84" y="53" width="1" height="467"/><rect x="195" y="53" width="1" height="467"/><rect x="306" y="53" width="1" height="467"/><rect x="416" y="53" width="1" height="467"/><rect x="527" y="53" width="1" height="467"/><rect x="638" y="53" width="1" height="467"/><rect x="749" y="53" width="1" height="467"/><rect x="860" y="53" width="1" height="467"/><rect x="1" y="450" width="999" height="1"/><rect x="1" y="403" width="999" height="1"/><rect x="1" y="357" width="999" height="1"/><rect x="1" y="310" width="999" height="1"/><rect x="1" y="263" width="999" height="1"/><rect x="1" y="217" width="999" height="1"/><rect x="1" y="170" width="999" height="1"/><rect x="1" y="123" width="999" height="1"/><rect x="1" y="77" width="999" height="1"/></g><path d="M330.0 476.1C325.7 477.0 312.7 479.8 304.0 481.6C295.3 483.4 284.1 485.6 278.0 486.8C271.9 488.0 270.4 488.3 267.6 488.7C264.8 489.1 263.3 489.3 261.1 489.1C258.9 488.9 256.8 488.4 254.6 487.6C252.4 486.9 250.4 485.8 248.1 484.6C245.8 483.4 243.0 481.8 240.5 480.3C238.0 478.8 236.4 477.9 233.2 475.6C230.0 473.3 224.9 469.4 221.5 466.5C218.1 463.6 215.6 460.7 213.0 458.0C210.4 455.3 209.0 453.4 205.9 450.3C202.8 447.2 198.1 443.2 194.2 439.3C190.3 435.4 186.1 431.0 182.5 426.9C178.9 422.8 175.4 418.3 172.4 414.4C169.4 410.5 168.5 408.8 164.6 403.3C160.7 397.8 154.2 389.0 149.0 381.2C143.8 373.4 137.3 362.8 133.4 356.5C129.5 350.2 128.1 348.1 125.5 343.3C122.9 338.5 120.4 333.2 117.7 327.7C115.0 322.2 111.8 316.1 109.3 310.5C106.8 304.9 104.8 298.9 103.0 294.0C101.2 289.1 100.1 286.0 98.6 280.9C97.1 275.8 95.3 269.5 94.0 263.4C92.7 257.3 91.6 250.7 90.8 244.5C90.0 238.3 89.6 233.9 89.2 226.3C88.8 218.7 88.4 206.8 88.2 199.0C88.0 191.2 88.0 184.3 88.2 179.5C88.4 174.7 89.0 173.4 89.5 170.4C90.0 167.4 90.8 164.4 91.5 161.3C92.2 158.2 92.6 155.9 94.0 152.0C95.4 148.1 97.0 142.4 99.9 137.7C102.8 133.0 106.8 127.7 111.6 124.0C116.4 120.3 122.4 117.9 128.5 115.6C134.6 113.3 143.4 111.4 148.0 110.2C152.6 109.0 151.7 109.4 156.0 108.6C160.3 107.8 169.7 105.8 174.0 105.2C178.3 104.6 179.6 104.9 182.0 104.9C184.4 104.9 184.2 104.6 188.5 105.0C192.8 105.4 200.4 106.1 208.0 107.3C215.6 108.5 225.3 110.4 234.0 112.0C242.7 113.6 251.2 115.1 260.0 117.1C268.8 119.1 279.1 121.8 286.8 124.1C294.5 126.4 295.0 127.2 306.3 131.0C317.6 134.8 343.8 143.3 354.4 147.1C365.0 150.9 359.7 149.6 370.0 153.6C380.3 157.6 393.3 162.2 416.0 171.3C438.7 180.4 487.9 200.8 506.4 208.4C524.9 216.0 509.2 209.6 527.2 216.9C545.2 224.2 595.9 244.8 614.4 252.4C632.9 260.1 630.8 259.5 638.4 262.8C646.0 266.1 651.7 268.6 660.0 272.1C668.3 275.6 673.4 277.3 688.4 283.6C703.4 289.9 738.3 304.7 750.0 309.7C761.7 314.7 748.8 309.3 758.8 313.5C768.8 317.7 797.4 329.7 810.0 334.8C822.6 339.9 825.0 340.1 834.4 344.0C843.8 347.9 858.8 355.1 866.4 358.4C874.0 361.7 876.7 362.4 880.0 364.0C883.3 365.6 885.3 367.1 886.4 367.7Z" fill="none" stroke="#f2b010" stroke-width="1.3"/><polygon points="801.0,337.3 556.3,262.9 409.6,219.3 333.7,338.5 260.5,463.2 462.9,423.6" fill="none" stroke="url(#halo)" stroke-width="30" filter="url(#blur4)"/><g clip-path="url(#cpoly)" shape-rendering="crispEdges"><rect x="408" y="218" width="5" height="2" fill="url(#s1)"/><rect x="406" y="220" width="14" height="2" fill="url(#s2)"/><rect x="405" y="222" width="22" height="2" fill="url(#s3)"/><rect x="404" y="224" width="30" height="2" fill="url(#s4)"/><rect x="403" y="226" width="37" height="2" fill="url(#s5)"/><rect x="401" y="228" width="46" height="2" fill="url(#s6)"/><rect x="400" y="230" width="54" height="2" fill="url(#s7)"/><rect x="399" y="232" width="62" height="2" fill="url(#s8)"/><rect x="397" y="234" width="70" height="2" fill="url(#s9)"/><rect x="396" y="236" width="78" height="2" fill="url(#s10)"/><rect x="395" y="238" width="86" height="2" fill="url(#s11)"/><rect x="394" y="240" width="93" height="2" fill="url(#s12)"/><rect x="392" y="242" width="102" height="2" fill="url(#s13)"/><rect x="391" y="244" width="110" height="2" fill="url(#s14)"/><rect x="390" y="246" width="118" height="2" fill="url(#s15)"/><rect x="389" y="248" width="125" height="2" fill="url(#s16)"/><rect x="387" y="250" width="134" height="2" fill="url(#s17)"/><rect x="386" y="252" width="142" height="2" fill="url(#s18)"/><rect x="385" y="254" width="150" height="2" fill="url(#s19)"/><rect x="383" y="256" width="158" height="2" fill="url(#s20)"/><rect x="382" y="258" width="166" height="2" fill="url(#s21)"/><rect x="381" y="260" width="174" height="2" fill="url(#s22)"/><rect x="380" y="262" width="181" height="2" fill="url(#s23)"/><rect x="378" y="264" width="190" height="2" fill="url(#s24)"/><rect x="377" y="266" width="198" height="2" fill="url(#s25)"/><rect x="376" y="268" width="205" height="2" fill="url(#s26)"/><rect x="375" y="270" width="213" height="2" fill="url(#s27)"/><rect x="373" y="272" width="221" height="2" fill="url(#s28)"/><rect x="372" y="274" width="229" height="2" fill="url(#s29)"/><rect x="371" y="276" width="236" height="2" fill="url(#s30)"/><rect x="369" y="278" width="245" height="2" fill="url(#s31)"/><rect x="368" y="280" width="253" height="2" fill="url(#s32)"/><rect x="367" y="282" width="260" height="2" fill="url(#s33)"/><rect x="366" y="284" width="268" height="2" fill="url(#s34)"/><rect x="364" y="286" width="276" height="2" fill="url(#s35)"/><rect x="363" y="288" width="284" height="2" fill="url(#s36)"/><rect x="362" y="290" width="291" height="2" fill="url(#s37)"/><rect x="361" y="292" width="299" height="2" fill="url(#s38)"/><rect x="359" y="294" width="308" height="2" fill="url(#s39)"/><rect x="358" y="296" width="315" height="2" fill="url(#s40)"/><rect x="357" y="298" width="323" height="2" fill="url(#s41)"/><rect x="355" y="300" width="331" height="2" fill="url(#s42)"/><rect x="354" y="302" width="339" height="2" fill="url(#s43)"/><rect x="353" y="304" width="347" height="2" fill="url(#s44)"/><rect x="352" y="306" width="354" height="2" fill="url(#s45)"/><rect x="350" y="308" width="363" height="2" fill="url(#s46)"/><rect x="349" y="310" width="370" height="2" fill="url(#s47)"/><rect x="348" y="312" width="378" height="2" fill="url(#s48)"/><rect x="347" y="314" width="385" height="2" fill="url(#s49)"/><rect x="345" y="316" width="394" height="2" fill="url(#s50)"/><rect x="344" y="318" width="402" height="2" fill="url(#s51)"/><rect x="343" y="320" width="409" height="2" fill="url(#s52)"/><rect x="341" y="322" width="418" height="2" fill="url(#s53)"/><rect x="340" y="324" width="425" height="2" fill="url(#s54)"/><rect x="339" y="326" width="433" height="2" fill="url(#s55)"/><rect x="338" y="328" width="440" height="2" fill="url(#s56)"/><rect x="336" y="330" width="449" height="2" fill="url(#s57)"/><rect x="335" y="332" width="457" height="2" fill="url(#s58)"/><rect x="334" y="334" width="464" height="2" fill="url(#s59)"/><rect x="333" y="336" width="469" height="2" fill="url(#s60)"/><rect x="331" y="338" width="469" height="2" fill="url(#s61)"/><rect x="330" y="340" width="462" height="2" fill="url(#s62)"/><rect x="329" y="342" width="455" height="2" fill="url(#s63)"/><rect x="328" y="344" width="448" height="2" fill="url(#s64)"/><rect x="327" y="346" width="441" height="2" fill="url(#s65)"/><rect x="325" y="348" width="436" height="2" fill="url(#s66)"/><rect x="324" y="350" width="429" height="2" fill="url(#s67)"/><rect x="323" y="352" width="422" height="2" fill="url(#s68)"/><rect x="322" y="354" width="415" height="2" fill="url(#s69)"/><rect x="321" y="356" width="408" height="2" fill="url(#s70)"/><rect x="320" y="358" width="401" height="2" fill="url(#s71)"/><rect x="318" y="360" width="396" height="2" fill="url(#s72)"/><rect x="317" y="362" width="389" height="2" fill="url(#s73)"/><rect x="316" y="364" width="382" height="2" fill="url(#s74)"/><rect x="315" y="366" width="375" height="2" fill="url(#s75)"/><rect x="314" y="368" width="368" height="2" fill="url(#s76)"/><rect x="313" y="370" width="361" height="2" fill="url(#s77)"/><rect x="311" y="372" width="356" height="2" fill="url(#s78)"/><rect x="310" y="374" width="349" height="2" fill="url(#s79)"/><rect x="309" y="376" width="342" height="2" fill="url(#s80)"/><rect x="308" y="378" width="335" height="2" fill="url(#s81)"/><rect x="307" y="380" width="328" height="2" fill="url(#s82)"/><rect x="305" y="382" width="322" height="2" fill="url(#s83)"/><rect x="304" y="384" width="316" height="2" fill="url(#s84)"/><rect x="303" y="386" width="309" height="2" fill="url(#s85)"/><rect x="302" y="388" width="302" height="2" fill="url(#s86)"/><rect x="301" y="390" width="295" height="2" fill="url(#s87)"/><rect x="300" y="392" width="288" height="2" fill="url(#s88)"/><rect x="298" y="394" width="282" height="2" fill="url(#s89)"/><rect x="297" y="396" width="275" height="2" fill="url(#s90)"/><rect x="296" y="398" width="269" height="2" fill="url(#s91)"/><rect x="295" y="400" width="262" height="2" fill="url(#s92)"/><rect x="294" y="402" width="255" height="2" fill="url(#s93)"/><rect x="293" y="404" width="248" height="2" fill="url(#s94)"/><rect x="291" y="406" width="242" height="2" fill="url(#s95)"/><rect x="290" y="408" width="235" height="2" fill="url(#s96)"/><rect x="289" y="410" width="229" height="2" fill="url(#s97)"/><rect x="288" y="412" width="222" height="2" fill="url(#s98)"/><rect x="287" y="414" width="215" height="2" fill="url(#s99)"/><rect x="286" y="416" width="208" height="2" fill="url(#s100)"/><rect x="284" y="418" width="202" height="2" fill="url(#s101)"/><rect x="283" y="420" width="195" height="2" fill="url(#s102)"/><rect x="282" y="422" width="189" height="2" fill="url(#s103)"/><rect x="281" y="424" width="181" height="2" fill="url(#s104)"/><rect x="280" y="426" width="172" height="2" fill="url(#s105)"/><rect x="278" y="428" width="164" height="2" fill="url(#s106)"/><rect x="277" y="430" width="155" height="2" fill="url(#s107)"/><rect x="276" y="432" width="145" height="2" fill="url(#s108)"/><rect x="275" y="434" width="136" height="2" fill="url(#s109)"/><rect x="274" y="436" width="127" height="2" fill="url(#s110)"/><rect x="273" y="438" width="118" height="2" fill="url(#s111)"/><rect x="271" y="440" width="110" height="2" fill="url(#s112)"/><rect x="270" y="442" width="100" height="2" fill="url(#s113)"/><rect x="269" y="444" width="91" height="2" fill="url(#s114)"/><rect x="268" y="446" width="82" height="2" fill="url(#s115)"/><rect x="267" y="448" width="73" height="2" fill="url(#s116)"/><rect x="266" y="450" width="63" height="2" fill="url(#s117)"/><rect x="264" y="452" width="55" height="2" fill="url(#s118)"/><rect x="263" y="454" width="46" height="2" fill="url(#s119)"/><rect x="262" y="456" width="37" height="2" fill="url(#s120)"/><rect x="261" y="458" width="28" height="2" fill="url(#s121)"/><rect x="260" y="460" width="18" height="2" fill="url(#s122)"/><rect x="259" y="462" width="9" height="2" fill="url(#s123)"/></g><g stroke-width="1.4" stroke-linecap="round"><line x1="377.2" y1="174.4" x2="492.2" y2="217.7" stroke="#057a05"/><line x1="492.2" y1="217.7" x2="584.3" y2="252.3" stroke="#3f6a0c"/><line x1="584.3" y1="252.3" x2="667.1" y2="283.5" stroke="#5a5a10"/><line x1="667.1" y1="283.5" x2="837.4" y2="347.6" stroke="#8e0404"/><line x1="377.2" y1="174.4" x2="341.9" y2="256.8" stroke="#067a10"/><line x1="341.9" y1="256.8" x2="314.1" y2="321.6" stroke="#06625a"/><line x1="314.1" y1="321.6" x2="277.5" y2="407.0" stroke="#044c7c"/><line x1="277.5" y1="407.0" x2="251.0" y2="468.8" stroke="#04048c"/><line x1="251.0" y1="468.8" x2="397.6" y2="438.5" stroke="#0a0480"/><line x1="397.6" y1="438.5" x2="514.9" y2="414.3" stroke="#3a0468"/><line x1="514.9" y1="414.3" x2="620.4" y2="392.4" stroke="#6a0440"/><line x1="620.4" y1="392.4" x2="837.4" y2="347.6" stroke="#8e0410"/></g><polygon points="801.0,337.3 556.3,262.9 409.6,219.3 333.7,338.5 260.5,463.2 462.9,423.6" fill="none" stroke="#ffffff" stroke-width="1.8" stroke-linejoin="miter"/><line x1="409.6" y1="219.3" x2="462.9" y2="423.6" stroke="#484848" stroke-width="0.5" stroke-dasharray="1.5625 1.5625"/><line x1="260.5" y1="463.2" x2="556.3" y2="262.9" stroke="#484848" stroke-width="0.5" stroke-dasharray="1.5625 1.5625"/><line x1="801.0" y1="338.0" x2="333.7" y2="339.0" stroke="#483c3c" stroke-width="0.5" stroke-dasharray="1.5625 1.5625"/><polyline points="359.5,384.2 360.2,383.7 360.9,383.3 361.7,382.8 362.5,382.3 363.4,381.7 364.4,381.1 365.5,380.4 366.7,379.7 368.0,378.9 369.4,378.1 370.9,377.1 372.6,376.1 374.4,375.1 376.4,373.9 378.6,372.6 381.0,371.3 383.6,369.8 386.5,368.2 389.6,366.5 393.0,364.6 396.7,362.6 400.8,360.5 405.3,358.2 410.1,355.8 415.4,353.3 421.2,350.5 427.5,347.7 434.3,344.7 441.7,341.5 449.7,338.3 458.4,334.9 467.8,331.5 477.8,328.0 488.6,324.5 500.0,321.1 512.3,317.7 525.0,314.4 538.2,311.3 551.9,308.5 566.1,306.1 580.7,304.0 595.6,302.3 606.2,301.4" fill="none" stroke="#1c1c14" stroke-width="1.05" stroke-linejoin="round"/><line x1="430.8" y1="53.2" x2="430.8" y2="519.5" stroke="#c4c4c4" stroke-opacity="0.42" stroke-width="1" stroke-dasharray="1.5625 1.5625"/><line x1="1" y1="343.4" x2="1000" y2="343.4" stroke="#c4c4c4" stroke-opacity="0.42" stroke-width="1" stroke-dasharray="1.5625 1.5625"/><rect x="374.0" y="171.2" width="6.4" height="6.4" fill="#78e030" fill-opacity="1.00"/><path d="M374.0 177.6V171.2H380.4" fill="none" stroke="#1c2c5c" stroke-width="0.9"/><path d="M374.0 177.6H380.4V171.2" fill="none" stroke="#c08428" stroke-width="0.9"/><path d="M376.0 175.6l2 -2.4l-1.6 0M376.2 173.8l1.6 1.2" stroke="#202020" stroke-width="0.9" fill="none"/><rect x="390.4" y="213.9" width="6.4" height="6.4" fill="#50e040" fill-opacity="0.55"/><path d="M390.4 220.3V213.9H396.8" fill="none" stroke="#6a7a20" stroke-width="0.9"/><path d="M390.4 220.3H396.8V213.9" fill="none" stroke="#c88030" stroke-width="0.9"/><rect x="399.0" y="254.0" width="6.4" height="6.4" fill="#70f860" fill-opacity="0.55"/><path d="M399.0 260.4V254.0H405.4" fill="none" stroke="#3a6a30" stroke-width="0.9"/><path d="M399.0 260.4H405.4V254.0" fill="none" stroke="#d86028" stroke-width="0.9"/><rect x="416.8" y="297.2" width="6.4" height="6.4" fill="#b0ffa0" fill-opacity="0.55"/><path d="M416.8 303.6V297.2H423.2" fill="none" stroke="#3a7a30" stroke-width="0.9"/><path d="M416.8 303.6H423.2V297.2" fill="none" stroke="#e05830" stroke-width="0.9"/><circle cx="406.9" cy="223.7" r="2.9" fill="#30dc00" stroke="#0a7800" stroke-width="1"/><circle cx="409.3" cy="219.5" r="2.9" fill="#30dc00" stroke="#0a7800" stroke-width="1"/><circle cx="402.4" cy="255.2" r="2.9" fill="#20d800" stroke="#0a7800" stroke-width="1"/><circle cx="402.4" cy="255.2" r="0.7" fill="#0a6000"/><circle cx="416.0" cy="297.9" r="2.9" fill="#18d000" stroke="#0a8000" stroke-width="1"/><circle cx="416.0" cy="297.9" r="0.7" fill="#0a6000"/><rect x="565.3" y="243.1" width="6.4" height="6.4" fill="#e8d820" fill-opacity="1.00"/><path d="M565.3 249.5V243.1H571.7" fill="none" stroke="#c07818" stroke-width="0.9"/><path d="M565.3 249.5H571.7V243.1" fill="none" stroke="#f08818" stroke-width="0.9"/><path d="M567.3 247.5l2 -2.4l-1.6 0M567.5 245.7l1.6 1.2" stroke="#202020" stroke-width="0.9" fill="none"/><rect x="535.5" y="269.6" width="6.4" height="6.4" fill="#fff040" fill-opacity="0.55"/><path d="M535.5 276.0V269.6H541.9" fill="none" stroke="#e0a020" stroke-width="0.9"/><path d="M535.5 276.0H541.9V269.6" fill="none" stroke="#e04020" stroke-width="0.9"/><rect x="498.4" y="294.0" width="6.4" height="6.4" fill="#f0e060" fill-opacity="0.55"/><path d="M498.4 300.4V294.0H504.8" fill="none" stroke="#b0a030" stroke-width="0.9"/><path d="M498.4 300.4H504.8V294.0" fill="none" stroke="#e04020" stroke-width="0.9"/><rect x="459.0" y="315.3" width="6.4" height="6.4" fill="#f0e880" fill-opacity="0.55"/><path d="M459.0 321.7V315.3H465.4" fill="none" stroke="#b0a040" stroke-width="0.9"/><path d="M459.0 321.7H465.4V315.3" fill="none" stroke="#e05030" stroke-width="0.9"/><circle cx="543.7" cy="270.9" r="2.7" fill="#e4e48c" stroke="#55552c" stroke-width="1"/><circle cx="543.7" cy="270.9" r="0.7" fill="#404020"/><circle cx="556.3" cy="262.9" r="2.7" fill="#e4e48c" stroke="#55552c" stroke-width="1"/><circle cx="556.3" cy="262.9" r="0.7" fill="#404020"/><circle cx="501.6" cy="295.8" r="2.7" fill="#e6e690" stroke="#55552c" stroke-width="1"/><circle cx="501.6" cy="295.8" r="0.7" fill="#404020"/><circle cx="461.2" cy="317.9" r="2.7" fill="#eaea98" stroke="#60602c" stroke-width="1"/><circle cx="461.2" cy="317.9" r="0.7" fill="#404020"/><rect x="302.4" y="338.4" width="6.4" height="6.4" fill="#a4e0e6" fill-opacity="1.00"/><path d="M302.4 344.8V338.4H308.8" fill="none" stroke="#3c80c8" stroke-width="0.9"/><path d="M302.4 344.8H308.8V338.4" fill="none" stroke="#d04868" stroke-width="0.9"/><path d="M304.4 342.8l2 -2.4l-1.6 0M304.6 341.0l1.6 1.2" stroke="#202020" stroke-width="0.9" fill="none"/><rect x="331.8" y="339.8" width="6.4" height="6.4" fill="#68e4e8" fill-opacity="0.55"/><path d="M331.8 346.2V339.8H338.2" fill="none" stroke="#3c80c8" stroke-width="0.9"/><path d="M331.8 346.2H338.2V339.8" fill="none" stroke="#d84868" stroke-width="0.9"/><rect x="368.3" y="337.9" width="6.4" height="6.4" fill="#b4f4fa" fill-opacity="0.55"/><path d="M368.3 344.3V337.9H374.7" fill="none" stroke="#30a0c8" stroke-width="0.9"/><path d="M368.3 344.3H374.7V337.9" fill="none" stroke="#e05078" stroke-width="0.9"/><rect x="393.3" y="338.8" width="6.4" height="6.4" fill="#c8f8fc" fill-opacity="0.55"/><path d="M393.3 345.2V338.8H399.7" fill="none" stroke="#30a0c8" stroke-width="0.9"/><path d="M393.3 345.2H399.7V338.8" fill="none" stroke="#e05078" stroke-width="0.9"/><circle cx="333.5" cy="338.5" r="2.9" fill="#80d4d0" stroke="#3f7f80" stroke-width="1"/><circle cx="338.3" cy="340.4" r="2.9" fill="#88dcd8" stroke="#3f7f80" stroke-width="1"/><circle cx="338.3" cy="340.4" r="0.7" fill="#2a5a5a"/><circle cx="364.0" cy="339.2" r="2.9" fill="#88dcd8" stroke="#3f7f80" stroke-width="1"/><circle cx="364.0" cy="339.2" r="0.7" fill="#2a5a5a"/><circle cx="391.5" cy="342.0" r="2.9" fill="#8cdcd8" stroke="#3f7f80" stroke-width="1"/><circle cx="391.5" cy="342.0" r="0.7" fill="#2a5a5a"/><rect x="247.8" y="465.6" width="6.5" height="6.5" fill="#4040f0" fill-opacity="1.00"/><path d="M247.8 472.1V465.6H254.2" fill="none" stroke="#c00870" stroke-width="0.9"/><path d="M247.8 472.1H254.2V465.6" fill="none" stroke="#c00870" stroke-width="0.9"/><path d="M249.8 470.0l2 -2.4l-1.6 0M250.0 468.2l1.6 1.2" stroke="#e8e8ff" stroke-width="0.9" fill="none"/><rect x="290.1" y="434.7" width="6.4" height="6.4" fill="#8080ff" fill-opacity="0.55"/><path d="M290.1 441.1V434.7H296.5" fill="none" stroke="#3030b0" stroke-width="0.9"/><path d="M290.1 441.1H296.5V434.7" fill="none" stroke="#c01850" stroke-width="0.9"/><rect x="338.7" y="404.5" width="6.4" height="6.4" fill="#3838f8" fill-opacity="0.55"/><path d="M338.7 410.9V404.5H345.1" fill="none" stroke="#202890" stroke-width="0.9"/><path d="M338.7 410.9H345.1V404.5" fill="none" stroke="#c01050" stroke-width="0.9"/><rect x="381.6" y="370.2" width="6.4" height="6.4" fill="#f8f0ff" fill-opacity="0.55"/><path d="M381.6 376.6V370.2H388.0" fill="none" stroke="#3020d0" stroke-width="0.9"/><path d="M381.6 376.6H388.0V370.2" fill="none" stroke="#c010a0" stroke-width="0.9"/><circle cx="260.0" cy="463.4" r="2.9" fill="#3048f0" stroke="#202880" stroke-width="1"/><circle cx="287.5" cy="438.4" r="2.9" fill="#3848e8" stroke="#303890" stroke-width="1"/><circle cx="389.2" cy="370.3" r="2.7" fill="#2838f0" stroke="#2030b0" stroke-width="1"/><rect x="430.4" y="362.4" width="6.4" height="6.4" fill="#e828d8" fill-opacity="0.55"/><path d="M430.4 368.8V362.4H436.8" fill="none" stroke="#a010a0" stroke-width="0.9"/><path d="M430.4 368.8H436.8V362.4" fill="none" stroke="#e02080" stroke-width="0.9"/><rect x="442.7" y="380.4" width="6.4" height="6.4" fill="#d010c8" fill-opacity="0.55"/><path d="M442.7 386.8V380.4H449.1" fill="none" stroke="#800890" stroke-width="0.9"/><path d="M442.7 386.8H449.1V380.4" fill="none" stroke="#d02070" stroke-width="0.9"/><rect x="449.6" y="401.7" width="6.4" height="6.4" fill="#ffd0ff" fill-opacity="0.55"/><path d="M449.6 408.1V401.7H456.0" fill="none" stroke="#b020c0" stroke-width="0.9"/><path d="M449.6 408.1H456.0V401.7" fill="none" stroke="#e03080" stroke-width="0.9"/><rect x="449.6" y="423.6" width="6.4" height="6.4" fill="#e040e0" fill-opacity="1.00"/><path d="M449.6 430.0V423.6H456.0" fill="none" stroke="#c02090" stroke-width="0.9"/><path d="M449.6 430.0H456.0V423.6" fill="none" stroke="#e03070" stroke-width="0.9"/><path d="M451.6 428.0l2 -2.4l-1.6 0M451.8 426.2l1.6 1.2" stroke="#202020" stroke-width="0.9" fill="none"/><circle cx="433.6" cy="364.6" r="2.9" fill="#e020e0" stroke="#801088" stroke-width="1"/><circle cx="433.6" cy="364.6" r="0.7" fill="#500050"/><circle cx="445.9" cy="383.6" r="2.9" fill="#d818d8" stroke="#801088" stroke-width="1"/><circle cx="445.9" cy="383.6" r="0.7" fill="#500050"/><circle cx="457.9" cy="404.1" r="2.9" fill="#e020e0" stroke="#801088" stroke-width="1"/><circle cx="457.9" cy="404.1" r="0.7" fill="#500050"/><circle cx="462.9" cy="423.6" r="2.9" fill="#e020e0" stroke="#801088" stroke-width="1"/><circle cx="462.9" cy="423.6" r="0.7" fill="#500050"/><rect x="526.8" y="339.1" width="6.4" height="6.4" fill="#ffc0c0" fill-opacity="0.55"/><path d="M526.8 345.5V339.1H533.2" fill="none" stroke="#e00010" stroke-width="0.9"/><path d="M526.8 345.5H533.2V339.1" fill="none" stroke="#e00010" stroke-width="0.9"/><rect x="634.8" y="343.1" width="6.4" height="6.4" fill="#ff4a60" fill-opacity="0.55"/><path d="M634.8 349.5V343.1H641.2" fill="none" stroke="#d02040" stroke-width="0.9"/><path d="M634.8 349.5H641.2V343.1" fill="none" stroke="#e00018" stroke-width="0.9"/><rect x="733.9" y="344.1" width="6.4" height="6.4" fill="#ff3048" fill-opacity="0.55"/><path d="M733.9 350.5V344.1H740.3" fill="none" stroke="#c01040" stroke-width="0.9"/><path d="M733.9 350.5H740.3V344.1" fill="none" stroke="#e00020" stroke-width="0.9"/><rect x="834.1" y="344.5" width="6.4" height="6.4" fill="#e81828" fill-opacity="1.00"/><path d="M834.1 350.9V344.5H840.5" fill="none" stroke="#e80020" stroke-width="0.9"/><path d="M834.1 350.9H840.5V344.5" fill="none" stroke="#e80020" stroke-width="0.9"/><path d="M836.1 348.9l2 -2.4l-1.6 0M836.3 347.1l1.6 1.2" stroke="#ffd0d0" stroke-width="0.9" fill="none"/><circle cx="532.8" cy="340.9" r="2.6" fill="#e81010" stroke="#a01010" stroke-width="1"/><circle cx="644.8" cy="348.4" r="2.6" fill="#e01010" stroke="#a01010" stroke-width="1"/><circle cx="730.4" cy="343.3" r="2.9" fill="#d81818" stroke="#901010" stroke-width="1"/><circle cx="801.6" cy="337.2" r="2.9" fill="#d81010" stroke="#901010" stroke-width="1"/><g font-family="'Liberation Serif',serif" font-size="9.7" fill="#e0e2e6"><line x1="208.5" y1="86.5" x2="187.9" y2="104.5" stroke="#9a9ca4" stroke-width="1"/><line x1="375.5" y1="127.5" x2="354.4" y2="146.6" stroke="#9a9ca4" stroke-width="1"/><line x1="527.0" y1="187.5" x2="506.4" y2="208.4" stroke="#9a9ca4" stroke-width="1"/><line x1="635.0" y1="232.0" x2="614.4" y2="252.4" stroke="#9a9ca4" stroke-width="1"/><line x1="709.0" y1="263.0" x2="688.4" y2="283.6" stroke="#9a9ca4" stroke-width="1"/><line x1="779.0" y1="292.5" x2="758.8" y2="313.5" stroke="#9a9ca4" stroke-width="1"/><line x1="855.0" y1="325.5" x2="834.4" y2="344.0" stroke="#9a9ca4" stroke-width="1"/><line x1="887.0" y1="342.0" x2="866.4" y2="358.4" stroke="#9a9ca4" stroke-width="1"/><line x1="900.5" y1="347.0" x2="880.0" y2="364.0" stroke="#9a9ca4" stroke-width="1"/><line x1="70.0" y1="225.2" x2="88.2" y2="221.1" stroke="#9a9ca4" stroke-width="1"/><line x1="152.0" y1="419.7" x2="172.4" y2="414.4" stroke="#9a9ca4" stroke-width="1"/><line x1="201.4" y1="471.1" x2="221.5" y2="467.2" stroke="#9a9ca4" stroke-width="1"/><line x1="217.0" y1="484.0" x2="237.5" y2="479.3" stroke="#9a9ca4" stroke-width="1"/><line x1="227.5" y1="490.0" x2="248.0" y2="485.6" stroke="#9a9ca4" stroke-width="1"/><text x="209.5" y="89.8" textLength="43.0" lengthAdjust="spacingAndGlyphs">520 nm</text><text x="375.4" y="132.5" textLength="43.5" lengthAdjust="spacingAndGlyphs">540 nm</text><text x="527.5" y="194.0" textLength="43.5" lengthAdjust="spacingAndGlyphs">560 nm</text><text x="635.0" y="239.0" textLength="43.5" lengthAdjust="spacingAndGlyphs">580 nm</text><text x="709.0" y="270.0" textLength="43.5" lengthAdjust="spacingAndGlyphs">600 nm</text><text x="778.5" y="299.0" textLength="43.5" lengthAdjust="spacingAndGlyphs">620 nm</text><text x="854.9" y="330.4" textLength="43.5" lengthAdjust="spacingAndGlyphs">640 nm</text><text x="887.5" y="344.5" textLength="43.5" lengthAdjust="spacingAndGlyphs">660 nm</text><text x="900.8" y="350.0" textLength="43.5" lengthAdjust="spacingAndGlyphs">680 nm</text><text x="31.5" y="234.0" textLength="43.5" lengthAdjust="spacingAndGlyphs">500 nm</text><text x="116.0" y="427.5" textLength="43.0" lengthAdjust="spacingAndGlyphs">480 nm</text><text x="165.0" y="479.7" textLength="43.5" lengthAdjust="spacingAndGlyphs">460 nm</text><text x="180.5" y="491.5" textLength="43.5" lengthAdjust="spacingAndGlyphs">440 nm</text><text x="191.5" y="498.5" textLength="43.5" lengthAdjust="spacingAndGlyphs">420 nm</text></g><g font-family="'Liberation Sans',sans-serif" font-size="6.5" fill="#c4ccd4"><text x="196.1" y="518">0.1</text><text x="307.0" y="518">0.2</text><text x="417.8" y="518">0.3</text><text x="528.6" y="518">0.4</text><text x="639.4" y="518">0.5</text><text x="750.3" y="518">0.6</text><text x="861.1" y="518">0.7</text><text x="2" y="448.2">0.1</text><text x="2" y="401.5">0.2</text><text x="2" y="354.9">0.3</text><text x="2" y="308.2">0.4</text><text x="2" y="261.6">0.5</text><text x="2" y="215.0">0.6</text><text x="2" y="168.3">0.7</text><text x="2" y="121.7">0.8</text></g><text x="913" y="488.5" font-family="'Liberation Sans',sans-serif" font-weight="bold" font-size="8.6" fill="#4c4e4c" textLength="80.8" lengthAdjust="spacingAndGlyphs">hcfr.sourceforge.net</text></g></svg>
<div id="leftedge" class="abs"></div><div id="rightedge" class="abs"></div>
<div id="title" class="abs"><svg style="left:1.0px;top:2.6px" width="10.5" height="9.6" viewBox="0 0 12 11"><rect width="12" height="11" fill="#101010"/><rect x="1.2" y="3" width="2.6" height="8" fill="#e01010"/><rect x="4.7" y="1.6" width="2.6" height="9.4" fill="#18c818"/><rect x="8.2" y="3.6" width="2.6" height="7.4" fill="#1828e0"/><rect x="0" y="0" width="12" height="2.2" fill="#303030" opacity="0.7"/></svg><div class="t">HCFR Colorimeter - 3.5.4.2 - [HDR.chc]</div><svg style="left:900px;top:0" width="100" height="15" viewBox="900 0 100 15"><g fill="none" stroke-linecap="round"><path d="M919.5 7.2H925" stroke="#a0a0a0" stroke-width="1"/><rect x="950" y="5.4" width="5" height="5" rx="1.2" stroke="#707070" stroke-width="0.9"/><path d="M951.4 5.2V4.9Q951.4 4 952.4 4H955.4Q956.6 4 956.6 5.2V8Q956.6 9 955.4 9" stroke="#707070" stroke-width="0.9"/><path d="M980.6 4.4L986.4 10.4M986.4 4.4L980.6 10.4" stroke="#686868" stroke-width="0.9"/></g></svg></div><div id="menu" class="abs"><svg style="left:1.5px;top:2px" width="3" height="11"><g fill="#9fb0d0"><rect x="0.5" y="0" width="1" height="1"/><rect x="0.5" y="2" width="1" height="1"/><rect x="0.5" y="4" width="1" height="1"/><rect x="0.5" y="6" width="1" height="1"/><rect x="0.5" y="8" width="1" height="1"/><rect x="0.5" y="10" width="1" height="1"/></g></svg><svg style="left:6.0px;top:2.2px" width="11.5" height="10.5" viewBox="0 0 12 11"><rect width="12" height="11" fill="#101010"/><rect x="1.2" y="3" width="2.6" height="8" fill="#e01010"/><rect x="4.7" y="1.6" width="2.6" height="9.4" fill="#18c818"/><rect x="8.2" y="3.6" width="2.6" height="7.4" fill="#1828e0"/><rect x="0" y="0" width="12" height="2.2" fill="#303030" opacity="0.7"/></svg><span style="left:19.6px"><u>F</u>ile</span><span style="left:44.2px"><u>E</u>dit</span><span style="left:70.8px"><u>V</u>iew</span><span style="left:100.6px"><u>M</u>easures</span><span style="left:145.8px"><u>G</u>raphs</span><span style="left:182.6px"><u>A</u>dvanced</span><span style="left:230.6px"><u>W</u>indow</span><span style="left:272.4px"><u>H</u>elp</span><svg style="left:955px;top:0" width="45" height="15" viewBox="955 14.5 45 15"><g fill="none" stroke="#101010"><path d="M961.4 25.4H965.6" stroke-width="1.4"/><rect x="973.6" y="22.6" width="4.2" height="3.4" stroke-width="1"/><path d="M975.4 22.4V20.8H979.8V24.2H978" stroke-width="1"/><path d="M986.8 19.6L992 25M992 19.6L986.8 25" stroke-width="1.4"/></g></svg></div><div id="tool" class="abs"></div><div id="tb1" class="abs"></div><div id="tb2" class="abs"></div><svg style="left:2.5px;top:33px" width="3" height="19"><g fill="#a9b7d3"><rect x="0.5" y="0" width="1" height="1"/><rect x="0.5" y="2" width="1" height="1"/><rect x="0.5" y="4" width="1" height="1"/><rect x="0.5" y="6" width="1" height="1"/><rect x="0.5" y="8" width="1" height="1"/><rect x="0.5" y="10" width="1" height="1"/><rect x="0.5" y="12" width="1" height="1"/><rect x="0.5" y="14" width="1" height="1"/><rect x="0.5" y="16" width="1" height="1"/></g></svg><svg style="left:203px;top:33px" width="3" height="19"><g fill="#a9b7d3"><rect x="0.5" y="0" width="1" height="1"/><rect x="0.5" y="2" width="1" height="1"/><rect x="0.5" y="4" width="1" height="1"/><rect x="0.5" y="6" width="1" height="1"/><rect x="0.5" y="8" width="1" height="1"/><rect x="0.5" y="10" width="1" height="1"/><rect x="0.5" y="12" width="1" height="1"/><rect x="0.5" y="14" width="1" height="1"/><rect x="0.5" y="16" width="1" height="1"/></g></svg><svg style="left:0;top:30px" width="135" height="23" viewBox="0 30 135 23"><defs><radialGradient id="bR" cx="0.35" cy="0.3" r="0.8"><stop offset="0" stop-color="#ff8098"/><stop offset="0.3" stop-color="#e00034"/><stop offset="1" stop-color="#c0002a"/></radialGradient><radialGradient id="bG" cx="0.35" cy="0.3" r="0.8"><stop offset="0" stop-color="#b8ff90"/><stop offset="0.3" stop-color="#40dc00"/><stop offset="1" stop-color="#2cb400"/></radialGradient><radialGradient id="bB" cx="0.35" cy="0.3" r="0.8"><stop offset="0" stop-color="#8090ff"/><stop offset="0.3" stop-color="#0408dc"/><stop offset="1" stop-color="#0004b0"/></radialGradient><radialGradient id="bK" cx="0.35" cy="0.3" r="0.8"><stop offset="0" stop-color="#e0e0e0"/><stop offset="0.4" stop-color="#606060"/><stop offset="1" stop-color="#101010"/></radialGradient><radialGradient id="bS" cx="0.35" cy="0.3" r="0.8"><stop offset="0" stop-color="#f0f0f0"/><stop offset="0.5" stop-color="#9a9a9a"/><stop offset="1" stop-color="#4a4a4a"/></radialGradient><radialGradient id="bW" cx="0.35" cy="0.3" r="0.8"><stop offset="0" stop-color="#ffffff"/><stop offset="0.6" stop-color="#d0d0d0"/><stop offset="1" stop-color="#8a8a8a"/></radialGradient><radialGradient id="bY" cx="0.35" cy="0.3" r="0.8"><stop offset="0" stop-color="#ffffc0"/><stop offset="0.5" stop-color="#f0e020"/><stop offset="1" stop-color="#a09000"/></radialGradient><radialGradient id="bM" cx="0.35" cy="0.3" r="0.8"><stop offset="0" stop-color="#ffc0ff"/><stop offset="0.5" stop-color="#d030e0"/><stop offset="1" stop-color="#801090"/></radialGradient><radialGradient id="bC" cx="0.35" cy="0.3" r="0.8"><stop offset="0" stop-color="#c0ffff"/><stop offset="0.5" stop-color="#20d0e0"/><stop offset="1" stop-color="#108090"/></radialGradient></defs><circle cx="12.5" cy="35.3" r="2.4" fill="url(#bW)"/><circle cx="9.3" cy="37" r="2.5" fill="url(#bW)"/><circle cx="9.3" cy="39.8" r="2.5" fill="url(#bW)"/><circle cx="9.4" cy="42.5" r="2.5" fill="url(#bS)"/><circle cx="12.4" cy="43.6" r="2.7" fill="url(#bS)"/><circle cx="15.8" cy="44.6" r="3" fill="url(#bS)"/><circle cx="19.6" cy="45.5" r="3.7" fill="url(#bK)"/><circle cx="35.6" cy="37.2" r="4" fill="url(#bR)"/><circle cx="31" cy="45.8" r="4.1" fill="url(#bG)"/><circle cx="39.8" cy="45.8" r="4.1" fill="url(#bB)"/><circle cx="58.1" cy="35.6" r="2.4" fill="url(#bY)"/><circle cx="61.5" cy="38.3" r="2.4" fill="url(#bM)"/><circle cx="61.6" cy="42.4" r="2.4" fill="url(#bC)"/><circle cx="51.2" cy="45.6" r="3.8" fill="url(#bR)"/><circle cx="54.8" cy="45.2" r="3.7" fill="url(#bB)"/><circle cx="57.8" cy="43.2" r="3" fill="url(#bG)"/><circle cx="74" cy="35.6" r="2.7" fill="url(#bW)"/><circle cx="78.6" cy="35.2" r="2.5" fill="url(#bY)"/><circle cx="81.8" cy="37.6" r="2.4" fill="url(#bM)"/><circle cx="82.2" cy="41.4" r="2.5" fill="url(#bC)"/><circle cx="70.6" cy="39.4" r="2.8" fill="url(#bW)"/><circle cx="70.8" cy="44" r="3" fill="url(#bK)"/><circle cx="72.8" cy="47" r="3.2" fill="url(#bR)"/><circle cx="76.4" cy="45.6" r="2.8" fill="url(#bB)"/><circle cx="79" cy="43.6" r="2.8" fill="url(#bG)"/><circle cx="81.6" cy="46.2" r="3.2" fill="url(#bK)"/><rect x="87" y="33" width="1" height="17" fill="#c4cad6"/><path d="M92.4 37.6L97 36.2L98.4 34.4L103.6 34L105 35.6L107.8 35.4L108.2 46.8L93 48.4Z" fill="#e4e4e4" stroke="#5a5a5a" stroke-width="0.7"/><path d="M92.4 37.6L93 48.4L95.4 47.6L95 37Z" fill="#b8b8b8"/><circle cx="102.2" cy="41.8" r="3.7" fill="#d8d8d8" stroke="#4a4a4a" stroke-width="0.7"/><circle cx="102.2" cy="41.8" r="2" fill="#2a4a8a" stroke="#202020" stroke-width="0.6"/><path d="M114.4 34.6L127.4 41.2L114.4 47.8Z" fill="#3cc848" stroke="#7adc82" stroke-width="1" stroke-linejoin="round"/></svg><div class="abs" style="left:378.6px;top:33px;width:1px;height:17px;background:#c9ced9"></div><div class="abs" style="left:422.4px;top:33px;width:1px;height:17px;background:#c9ced9"></div><div class="selb" style="left:205.4px;width:20.4px"></div><div class="selb" style="left:228.4px;width:19.8px"></div><div class="selb" style="left:248.6px;width:20.4px"></div><div class="selb" style="left:269.4px;width:20.6px"></div><div class="selb" style="left:313.0px;width:20.4px"></div><svg style="left:205.6px;top:32.5px" width="20" height="19" viewBox="0 0 20 19"><path d="M2.2 3.4L16.8 1.2L16.8 13L2.2 12Z" fill="#fbfcfe" stroke="#7683a0" stroke-width="0.9"/><path d="M16.8 1.2L18.7 2.4L18.7 12.4L16.8 13Z" fill="#4a5264"/><path d="M7.4 12.5L12.6 12.9L13 15.2L6.8 15.2Z" fill="#8791a6"/><path d="M4.2 15.2H14.8L16.4 17.4H2.6Z" fill="#2f3540"/><path d="M4 6.5L15 4.5" stroke="#c8b090" stroke-width="0.5"/><g fill="#d8a860"><circle cx="6" cy="9.5" r="0.5"/><circle cx="8" cy="8.4" r="0.5"/><circle cx="10" cy="7.6" r="0.5"/><circle cx="12" cy="6.6" r="0.5"/><circle cx="14" cy="6" r="0.5"/><circle cx="7" cy="7.2" r="0.5"/><circle cx="11" cy="9.5" r="0.5"/></g></svg><svg style="left:228.6px;top:32.5px" width="20" height="19" viewBox="0 0 20 19"><path d="M2.2 3.4L16.8 1.2L16.8 13L2.2 12Z" fill="#fbfcfe" stroke="#7683a0" stroke-width="0.9"/><path d="M16.8 1.2L18.7 2.4L18.7 12.4L16.8 13Z" fill="#4a5264"/><path d="M7.4 12.5L12.6 12.9L13 15.2L6.8 15.2Z" fill="#8791a6"/><path d="M4.2 15.2H14.8L16.4 17.4H2.6Z" fill="#2f3540"/><path d="M4 11Q11 10.5 15.5 3.6" fill="none" stroke="#e0c000" stroke-width="1.1"/></svg><svg style="left:248.8px;top:32.5px" width="20" height="19" viewBox="0 0 20 19"><path d="M2.2 3.4L16.8 1.2L16.8 13L2.2 12Z" fill="#fbfcfe" stroke="#7683a0" stroke-width="0.9"/><path d="M16.8 1.2L18.7 2.4L18.7 12.4L16.8 13Z" fill="#4a5264"/><path d="M7.4 12.5L12.6 12.9L13 15.2L6.8 15.2Z" fill="#8791a6"/><path d="M4.2 15.2H14.8L16.4 17.4H2.6Z" fill="#2f3540"/><path d="M4.5 9Q8 5.6 10.4 7.4T15.5 6" fill="none" stroke="#e0c000" stroke-width="1.1"/></svg><svg style="left:269.6px;top:32.5px" width="20" height="19" viewBox="0 0 20 19"><path d="M2.2 3.4L16.8 1.2L16.8 13L2.2 12Z" fill="#fbfcfe" stroke="#7683a0" stroke-width="0.9"/><path d="M16.8 1.2L18.7 2.4L18.7 12.4L16.8 13Z" fill="#4a5264"/><path d="M7.4 12.5L12.6 12.9L13 15.2L6.8 15.2Z" fill="#8791a6"/><path d="M4.2 15.2H14.8L16.4 17.4H2.6Z" fill="#2f3540"/><path d="M4 6L6.5 4.6L9 7.2L11.6 5L15.6 7.6" fill="none" stroke="#e02020" stroke-width="1"/><path d="M4 8.6L7 6.6L10 9L13 7L15.6 9.6" fill="none" stroke="#20a020" stroke-width="1"/><path d="M4 10.4L7.4 9L10.4 11L15.6 10.6" fill="none" stroke="#2040e0" stroke-width="1"/></svg><svg style="left:290.6px;top:32.5px" width="20" height="19" viewBox="0 0 20 19"><path d="M2.2 3.4L16.8 1.2L16.8 13L2.2 12Z" fill="#fbfcfe" stroke="#7683a0" stroke-width="0.9"/><path d="M16.8 1.2L18.7 2.4L18.7 12.4L16.8 13Z" fill="#4a5264"/><path d="M7.4 12.5L12.6 12.9L13 15.2L6.8 15.2Z" fill="#8791a6"/><path d="M4.2 15.2H14.8L16.4 17.4H2.6Z" fill="#2f3540"/><path d="M4 6Q7 10.4 10 9.4T15.6 5" fill="none" stroke="#7a6ad8" stroke-width="0.9"/></svg><svg style="left:313.2px;top:32.5px" width="20" height="19" viewBox="0 0 20 19"><path d="M2.2 3.4L16.8 1.2L16.8 13L2.2 12Z" fill="#fbfcfe" stroke="#7683a0" stroke-width="0.9"/><path d="M16.8 1.2L18.7 2.4L18.7 12.4L16.8 13Z" fill="#4a5264"/><path d="M7.4 12.5L12.6 12.9L13 15.2L6.8 15.2Z" fill="#8791a6"/><path d="M4.2 15.2H14.8L16.4 17.4H2.6Z" fill="#2f3540"/><path d="M6.4 11.2L7.4 3.4Q9 2.6 10 4.2L15 9.2Z" fill="#30c040"/><path d="M6.4 11.2L15 9.2L10.6 6.6Z" fill="#e03030"/><path d="M6.4 11.2L7 7L9.6 8.4Z" fill="#3040e0"/></svg><svg style="left:336.6px;top:32.5px" width="20" height="19" viewBox="0 0 20 19"><path d="M2.2 3.4L16.8 1.2L16.8 13L2.2 12Z" fill="#fbfcfe" stroke="#7683a0" stroke-width="0.9"/><path d="M16.8 1.2L18.7 2.4L18.7 12.4L16.8 13Z" fill="#4a5264"/><path d="M7.4 12.5L12.6 12.9L13 15.2L6.8 15.2Z" fill="#8791a6"/><path d="M4.2 15.2H14.8L16.4 17.4H2.6Z" fill="#2f3540"/><path d="M4.4 10.6L15.4 5.6" fill="none" stroke="#d8c000" stroke-width="1.2"/></svg><svg style="left:358.0px;top:32.5px" width="20" height="19" viewBox="0 0 20 19"><path d="M2.2 3.4L16.8 1.2L16.8 13L2.2 12Z" fill="#fbfcfe" stroke="#7683a0" stroke-width="0.9"/><path d="M16.8 1.2L18.7 2.4L18.7 12.4L16.8 13Z" fill="#4a5264"/><path d="M7.4 12.5L12.6 12.9L13 15.2L6.8 15.2Z" fill="#8791a6"/><path d="M4.2 15.2H14.8L16.4 17.4H2.6Z" fill="#2f3540"/><path d="M4.4 9.8L15.4 4.6" fill="none" stroke="#d8c000" stroke-width="1.2"/></svg><svg style="left:380.4px;top:32.5px" width="20" height="19" viewBox="0 0 20 19"><path d="M2.2 3.4L16.8 1.2L16.8 13L2.2 12Z" fill="#fbfcfe" stroke="#7683a0" stroke-width="0.9"/><path d="M16.8 1.2L18.7 2.4L18.7 12.4L16.8 13Z" fill="#4a5264"/><path d="M7.4 12.5L12.6 12.9L13 15.2L6.8 15.2Z" fill="#8791a6"/><path d="M4.2 15.2H14.8L16.4 17.4H2.6Z" fill="#2f3540"/><g stroke-width="1.1" fill="none"><path d="M3.4 4.6L16 3" stroke="#e8b030"/><path d="M3.4 6.2L16 4.8" stroke="#e040a0"/><path d="M3.4 7.8L16 6.6" stroke="#40c040"/><path d="M3.4 9.4L16 8.4" stroke="#40c0e0"/><path d="M3.4 10.8L16 10.2" stroke="#e8e040"/></g></svg><svg style="left:401.6px;top:32.5px" width="20" height="19" viewBox="0 0 20 19"><path d="M2.2 3.4L16.8 1.2L16.8 13L2.2 12Z" fill="#fbfcfe" stroke="#7683a0" stroke-width="0.9"/><path d="M16.8 1.2L18.7 2.4L18.7 12.4L16.8 13Z" fill="#4a5264"/><path d="M7.4 12.5L12.6 12.9L13 15.2L6.8 15.2Z" fill="#8791a6"/><path d="M4.2 15.2H14.8L16.4 17.4H2.6Z" fill="#2f3540"/><g stroke-width="1" fill="none"><path d="M3.4 4.8L16 3.2" stroke="#e8b030"/><path d="M3.4 6.4L8 6.6L11 5.4L16 5.6" stroke="#e03060"/><path d="M3.4 8L16 7" stroke="#40c040"/><path d="M3.4 10.4L7 9.4L10 10.6L16 9.4" stroke="#e040c0"/></g></svg><svg style="left:424.0px;top:32.5px" width="20" height="19" viewBox="0 0 20 19"><path d="M2.2 3.4L16.8 1.2L16.8 13L2.2 12Z" fill="#fbfcfe" stroke="#7683a0" stroke-width="0.9"/><path d="M16.8 1.2L18.7 2.4L18.7 12.4L16.8 13Z" fill="#4a5264"/><path d="M7.4 12.5L12.6 12.9L13 15.2L6.8 15.2Z" fill="#8791a6"/><path d="M4.2 15.2H14.8L16.4 17.4H2.6Z" fill="#2f3540"/><path d="M2.5 3.2L17 1.2L17 13L2.5 12.2Z" fill="#3a3f4a"/><g stroke-width="1" fill="none"><path d="M3.4 4.8L16 3.2" stroke="#e8e030"/><path d="M3.4 6.4L16 5.2" stroke="#e040c0"/><path d="M3.4 8L16 7.2" stroke="#40e040"/><path d="M3.4 9.6L16 9" stroke="#4080ff"/><path d="M3.4 11L16 10.8" stroke="#e04040"/></g></svg><div id="tabs" class="abs"><svg style="left:0;top:0" width="230" height="12" viewBox="0 521 230 12"><rect x="0" y="521" width="230" height="12" fill="#ececec"/><path d="M28 521.5L33.5 531.8H204.5L210.5 521.5Z" fill="#f4f4f4"/><path d="M163.5 521.5L169 531.8H204.5L210.5 521.5Z" fill="#ffffff"/><g fill="none" stroke="#303030" stroke-width="0.9"><path d="M28 521.5L33.5 531.8H60.5L65.5 526.6"/><path d="M62.5 521.5L68 531.8H94.5L99.5 526.6"/><path d="M96.5 521.5L102 531.8H122.5L127.5 526.6"/><path d="M124.5 521.5L130 531.8H160.5L166 526.6"/><path d="M163.5 521.5L169 531.8H204.5L210.5 521.5"/></g><g fill="#f6f6f6" stroke="#606060" stroke-width="0.8"><rect x="0.5" y="521.8" width="8.4" height="9.4"/><rect x="9.3" y="521.8" width="8.6" height="9.4"/><rect x="18.3" y="521.8" width="8.8" height="9.4"/></g><path d="M0 531.6H27.5" stroke="#202020" stroke-width="1"/><path d="M2.6 524.2L6.8 528.8M6.8 524.2L2.6 528.8" stroke="#101010" stroke-width="1"/><path d="M15 524L12.2 526.5L15 529Z" fill="#101010"/><path d="M21.6 524L24.4 526.5L21.6 529Z" fill="#101010"/></svg><span class="t" style="left:36.8px;font-weight:400;">Measures</span><span class="t" style="left:69.5px;font-weight:400;">Luminance</span><span class="t" style="left:103.8px;font-weight:400;">Gamma</span><span class="t" style="left:132.5px;font-weight:400;">RGB Levels</span><span class="t" style="left:169.0px;font-weight:700;font-size:5.6px;top:2.8px">CIE Diagram</span><svg style="left:850px;top:1px" width="150" height="12" viewBox="850 522 150 12"><rect x="854.5" y="523.4" width="9" height="7.6" rx="1.5" fill="#d8c020" stroke="#6a5a10" stroke-width="0.7"/><rect x="856.4" y="524.8" width="5" height="4.2" fill="#e04040"/><path d="M857 526.2L859 528L861.4 525" stroke="#ffe060" stroke-width="0.8" fill="none"/><rect x="936.5" y="525.6" width="7.4" height="7.4" fill="#ffffff" stroke="#505050" stroke-width="0.9"/></svg><span style="position:absolute;left:946.6px;top:2.6px;font-size:9.5px;color:#101010;white-space:pre">Reference</span></div><div id="task" class="abs"><svg style="left:0;top:0" width="1000" height="30" viewBox="0 533 1000 30"><defs><linearGradient id="wl" x1="0" y1="0" x2="1" y2="1"><stop offset="0" stop-color="#4cc6f8"/><stop offset="1" stop-color="#0a78d4"/></linearGradient><linearGradient id="fy" x1="0" y1="0" x2="0" y2="1"><stop offset="0" stop-color="#ffd75e"/><stop offset="1" stop-color="#f5b52a"/></linearGradient><linearGradient id="qb" x1="0" y1="0" x2="0" y2="1"><stop offset="0" stop-color="#7ab4f0"/><stop offset="1" stop-color="#2a62c8"/></linearGradient></defs><g fill="url(#wl)"><rect x="13.8" y="540" width="7" height="7" rx="0.6"/><rect x="21.6" y="540" width="7" height="7" rx="0.6"/><rect x="13.8" y="547.8" width="7" height="7" rx="0.6"/><rect x="21.6" y="547.8" width="7" height="7" rx="0.6"/></g><rect x="42.8" y="539.4" width="15.4" height="15.6" rx="1" fill="#0a64dc"/><circle cx="50.5" cy="547.2" r="6.2" fill="#ffffff"/><path d="M45.4 547.2L48.6 544.8V546.4H52.4V544.8L55.6 547.2L52.4 549.6V548H48.6V549.6Z" fill="#0a64dc"/><rect x="72.4" y="540.2" width="14.6" height="10.6" rx="0.8" fill="#c8ccd4" stroke="#8a8e98" stroke-width="0.6"/><rect x="73.8" y="541.4" width="11.8" height="8" fill="#3a50e0"/><text x="75.6" y="548" font-family="'Liberation Sans',sans-serif" font-weight="bold" font-size="6.4" fill="#ffffff">SC</text><rect x="77.6" y="551" width="4.4" height="1.6" fill="#9a9ea8"/><rect x="75" y="552.8" width="9.6" height="1.2" rx="0.6" fill="#b0b4bc"/><circle cx="107.6" cy="547.2" r="7.6" fill="url(#qb)"/><text x="102.2" y="550.2" font-family="'Liberation Sans',sans-serif" font-size="8.6" fill="#ffffff">qb</text><path d="M129.4 540.2H142.4L144.4 542.2V554.8H129.4Z" fill="#3a5ce0" stroke="#2038a8" stroke-width="0.5"/><rect x="132.4" y="540.4" width="7.6" height="4.2" fill="#dfe6ff"/><rect x="137.2" y="541" width="1.8" height="3" fill="#3a5ce0"/><rect x="131.2" y="547.2" width="11.4" height="7" fill="#ffffff"/><path d="M132 549.2H141.8M132 551H141.8" stroke="#f06a8a" stroke-width="0.6"/><text x="137" y="554" font-family="'Liberation Sans',sans-serif" font-size="3.2" fill="#303030">0Y</text><rect x="153" y="535.4" width="25.4" height="25" rx="2.4" fill="#f6f7fb"/><rect x="157.2" y="539.4" width="16.6" height="15.6" fill="#0c0c0c"/><rect x="158.8" y="544" width="3.6" height="11" fill="#e01414"/><rect x="163.6" y="542" width="3.6" height="13" fill="#18c818"/><rect x="168.4" y="545" width="3.6" height="10" fill="#1424dc"/><rect x="157.2" y="539.4" width="16.6" height="3" fill="#404040" opacity="0.55"/><rect x="160.6" y="557.4" width="9.6" height="2" rx="1" fill="#0a64c8"/><rect x="186.2" y="539.6" width="15.8" height="15" rx="2.4" fill="#ffffff"/><path d="M188.2 551L190 545.4Q194.2 543.4 198.4 545.4L200.2 551Q194.2 553.6 188.2 551Z" fill="#1a1a1a"/><path d="M189.4 549.4Q194.2 551.2 199 549.4" stroke="#5a5a5a" stroke-width="0.6" fill="none"/><ellipse cx="222.6" cy="547.4" rx="7.6" ry="3" fill="none" stroke="#6a6e7a" stroke-width="1" transform="rotate(-30 222.6 547.4)"/><ellipse cx="222.6" cy="547.4" rx="7.6" ry="3" fill="none" stroke="#6a6e7a" stroke-width="1" transform="rotate(60 222.6 547.4)"/><circle cx="222.6" cy="547.8" r="2.6" fill="#f0f2f8" stroke="#4a60c0" stroke-width="0.9"/><circle cx="225.2" cy="542.8" r="2.1" fill="#e01030"/><circle cx="251" cy="547.2" r="8" fill="#0a1018"/><circle cx="251" cy="547.2" r="6.4" fill="none" stroke="#18b4e0" stroke-width="1.3"/><path d="M248 543.8L251.4 547.2L248 550.6ZM251.4 543.8L255 547.2L251.4 550.6Z" fill="#18b4e0"/><circle cx="279.6" cy="547.2" r="7.2" fill="#fbfbfd"/><g fill="none" stroke="#e02828" stroke-width="0.9"><path d="M277 545.6Q276 547.2 277 548.8"/><path d="M279 544.4Q277.4 547.2 279 550"/><path d="M281 543.4Q278.8 547.2 281 551"/><path d="M283 542.6Q280.2 547.2 283 551.8"/><path d="M285 544Q283 547.2 285 550.4"/></g><rect x="300.4" y="539.2" width="16" height="16" fill="#5a28a8"/><text x="301.4" y="545.6" font-family="'Liberation Sans',sans-serif" font-weight="bold" font-size="5.8" fill="#ffffff">REW</text><path d="M301 554.6V550L302.6 547.6L304 551L305.6 549L307.4 551.6L309.4 550.4L312 552L315.8 551.6V554.6Z" fill="#30c850"/><path d="M301 554.6V552.4L303 551.4L305 553L308 552.4L312 553.6L315.8 553.2V554.6Z" fill="#e8e030"/><rect x="331" y="539.6" width="12.2" height="15.6" rx="1.2" fill="#5c6a84"/><rect x="332.6" y="541" width="9" height="3.4" fill="#6cd0f4"/><g fill="#eef1f6"><rect x="332.6" y="545.6" width="2.4" height="2.2"/><rect x="335.9" y="545.6" width="2.4" height="2.2"/><rect x="339.2" y="545.6" width="2.4" height="2.2"/><rect x="332.6" y="548.8" width="2.4" height="2.2"/><rect x="335.9" y="548.8" width="2.4" height="2.2"/><rect x="332.6" y="552" width="2.4" height="2.2"/><rect x="335.9" y="552" width="2.4" height="2.2"/></g><rect x="339.2" y="548.8" width="2.4" height="5.4" fill="#3a8ae8"/><path d="M358.2 541.4Q358.2 540.4 359.2 540.4H363.4L365 542H373Q374 542 374 543V553.4Q374 554.4 373 554.4H359.2Q358.2 554.4 358.2 553.4Z" fill="url(#fy)"/><path d="M360.6 551Q360.6 549.8 361.8 549.8H370.4Q371.6 549.8 371.6 551V554.4H360.6Z" fill="#1a78d8"/><circle cx="394.2" cy="547.6" r="7.4" fill="#f4f4f6" stroke="#d0d0d4" stroke-width="0.5"/><circle cx="394.2" cy="547.8" r="5" fill="#16161c"/><circle cx="394.2" cy="547.8" r="2.4" fill="#2a2a5a"/><circle cx="393.4" cy="546.8" r="0.8" fill="#8080c0"/><circle cx="394.2" cy="540" r="1" fill="#e81848"/><rect x="416" y="539.8" width="14.4" height="14.6" rx="2.4" fill="#b8101c"/><path d="M419 551.4Q422 548 422.8 543.2Q423 542 423.6 543Q424.2 546.6 427.8 549.2Q428.6 550 427.4 550Q423 549.4 419.6 551.8Q418.6 552.2 419 551.4Z" fill="none" stroke="#ffffff" stroke-width="1"/><rect x="446.6" y="540" width="12.4" height="14.6" rx="1" fill="#21a366"/><rect x="446.6" y="540" width="6.2" height="7.3" fill="#33c481"/><rect x="452.8" y="547.3" width="6.2" height="7.3" fill="#107c41"/><rect x="452.8" y="540" width="6.2" height="7.3" fill="#21a366"/><rect x="443.2" y="543" width="8.4" height="8.6" rx="0.8" fill="#107c41"/><text x="445" y="550" font-family="'Liberation Sans',sans-serif" font-weight="bold" font-size="6.6" fill="#ffffff">X</text><rect x="475.4" y="540" width="12.6" height="14.6" rx="1" fill="#2b7cd3"/><rect x="475.4" y="540" width="12.6" height="3.7" fill="#41a5ee"/><rect x="475.4" y="547.3" width="12.6" height="3.7" fill="#185abd"/><rect x="475.4" y="551" width="12.6" height="3.6" fill="#103f91"/><rect x="472" y="543" width="8.4" height="8.6" rx="0.8" fill="#185abd"/><text x="473" y="549.8" font-family="'Liberation Sans',sans-serif" font-weight="bold" font-size="6.4" fill="#ffffff">W</text><path d="M508 538.6A7.6 7.4 0 0 1 508 553.4Q506.4 553.4 505.2 553L503 555.2V552Q500.4 549.8 500.4 546A7.6 7.4 0 0 1 508 538.6Z" fill="#7360f2"/><path d="M505.2 542.8Q506 542.2 506.6 543.2L507.2 544.4Q507.4 545 506.6 545.6Q507.4 547.8 509.6 548.6Q510.2 547.8 510.8 548L512 548.6Q512.8 549.2 512.2 550Q511.2 551.2 509.8 550.6Q506 549 504.6 545.2Q504.2 543.6 505.2 542.8Z" fill="#ffffff"/><path d="M508.6 542.4Q511.8 542.8 512.2 546" fill="none" stroke="#ffffff" stroke-width="0.7"/><rect x="506.2" y="558" width="3.6" height="1.2" rx="0.6" fill="#7c7e86"/><circle cx="541.6" cy="542.4" r="2" fill="#7b83eb"/><circle cx="536" cy="541.6" r="2.4" fill="#5059c9"/><rect x="538" y="544.4" width="7.6" height="7.4" rx="1.6" fill="#7b83eb"/><rect x="531" y="543" width="9.6" height="9.4" rx="1" fill="#4b53bc"/><text x="533.4" y="550.8" font-family="'Liberation Sans',sans-serif" font-weight="bold" font-size="7.4" fill="#ffffff">T</text><rect x="534.6" y="551.6" width="10.4" height="4" rx="0.8" fill="#28d8c8"/><text x="535.4" y="555" font-family="'Liberation Sans',sans-serif" font-weight="bold" font-size="3.7" fill="#0a2a40">NEW</text><rect x="562" y="540" width="12" height="13.6" rx="1" fill="#1a78d4"/><rect x="562" y="540" width="12" height="4.6" fill="#28a8ea"/><rect x="568" y="544.6" width="6" height="4.4" fill="#50d0f8"/><path d="M562 553.6L574 546V552.6Q574 553.6 573 553.6Z" fill="#1490df"/><rect x="558" y="543.2" width="8.6" height="8.8" rx="0.8" fill="#0f64b8"/><circle cx="562.3" cy="547.6" r="2.3" fill="none" stroke="#ffffff" stroke-width="1.2"/><circle cx="594" cy="547.4" r="7.8" fill="#ffffff"/><path d="M594 547.4L587.25 543.5A7.8 7.8 0 0 1 600.75 543.5Z" fill="#ea4335"/><path d="M594 547.4L600.75 543.5A7.8 7.8 0 0 1 594 555.2Z" fill="#fbbc04"/><path d="M594 547.4L594 555.2A7.8 7.8 0 0 1 587.25 543.5Z" fill="#34a853"/><circle cx="594" cy="547.4" r="3.6" fill="#ffffff"/><circle cx="594" cy="547.4" r="2.8" fill="#4285f4"/><circle cx="601" cy="541.4" r="4.4" fill="#1e1e2c"/><path d="M600 538.6L601.4 544M602.6 539L600.4 543" stroke="#c8c8d8" stroke-width="0.6"/><rect x="592.2" y="558" width="3.6" height="1.2" rx="0.6" fill="#7c7e86"/><polygon points="630.5,546.4 630.5,548.4 628.4,548.9 627.9,550.2 629.0,552.0 627.6,553.4 625.8,552.3 624.5,552.8 624.0,554.9 622.0,554.9 621.5,552.8 620.2,552.3 618.4,553.4 617.0,552.0 618.1,550.2 617.6,548.9 615.5,548.4 615.5,546.4 617.6,545.9 618.1,544.6 617.0,542.8 618.4,541.4 620.2,542.5 621.5,542.0 622.0,539.9 624.0,539.9 624.5,542.0 625.8,542.5 627.6,541.4 629.0,542.8 627.9,544.6 628.4,545.9" fill="#70747e"/><circle cx="623" cy="547.4" r="3.6" fill="#e8e8ee"/><circle cx="623" cy="547.4" r="2.5" fill="#1a64d8"/><rect x="644.4" y="540.8" width="15.6" height="12" rx="0.8" fill="#2a98e4" stroke="#1870b8" stroke-width="0.5"/><rect x="645.6" y="542" width="13.2" height="8" fill="#bfe4fa"/><circle cx="650.4" cy="545.8" r="2.6" fill="#f0a020"/><path d="M650.4 545.8V543.2A2.6 2.6 0 0 1 653 545.8Z" fill="#2060c0"/><g fill="#2a80d0"><rect x="654.6" y="543" width="3.2" height="1.2"/><rect x="654.6" y="545.2" width="3.2" height="1.2"/><rect x="654.6" y="547.4" width="3.2" height="1.2"/></g><rect x="646" y="550.8" width="8" height="1.2" fill="#e8f4ff"/><circle cx="680.4" cy="547.2" r="7.6" fill="#1ed760"/><g fill="none" stroke="#101010" stroke-linecap="round"><path d="M675.8 544.6Q680.6 543 685.2 545.2" stroke-width="1.5"/><path d="M676.4 547.4Q680.6 546.2 684.4 548" stroke-width="1.2"/><path d="M677 550Q680.4 549.2 683.6 550.6" stroke-width="1"/></g><rect x="784.6" y="541" width="9.4" height="7" rx="0.6" fill="#e03040" stroke="#c0c0c8" stroke-width="0.5"/><text x="785.8" y="546.8" font-family="'Liberation Sans',sans-serif" font-weight="bold" font-size="4.6" fill="#ffffff">SC</text><rect x="787.6" y="548.2" width="3.4" height="1.4" fill="#b0b0b8"/><rect x="786" y="549.6" width="6.6" height="1" fill="#c8c8d0"/><path d="M810 541A4.6 4.4 0 0 1 810 550Q809 550 808.2 549.8L806.8 551.2V549.2Q805.4 547.8 805.4 545.5A4.6 4.4 0 0 1 810 541Z" fill="#7360f2"/><path d="M808.4 543.6L809.2 545L808.8 545.8Q809.4 547 810.8 547.6L811.4 547L812.6 547.8Q812.4 549 811 548.8Q808.4 548 807.8 545Q807.6 543.8 808.4 543.6Z" fill="#ffffff"/><path d="M829.6 541L834 542.4V546.4Q834 550 829.6 552Q825.2 550 825.2 546.4V542.4Z" fill="#1a88e0"/><path d="M829.6 541L834 542.4V546.4Q834 550 829.6 552Z" fill="#0a60b8"/><path d="M832.8 547.6L836.2 553.2H829.4Z" fill="#f8c818" stroke="#a07800" stroke-width="0.3"/><rect x="832.5" y="549.4" width="0.7" height="2" fill="#202020"/><rect x="832.5" y="551.9" width="0.7" height="0.7" fill="#202020"/><g fill="none" stroke="#202020" stroke-width="0.9" stroke-linecap="round"><path d="M875.4 545.6Q880.4 541.2 885.4 545.6"/><path d="M877 547.6Q880.4 544.8 883.8 547.6"/><path d="M878.6 549.6Q880.4 548.2 882.2 549.6"/></g><circle cx="880.4" cy="551.4" r="0.8" fill="#202020"/><path d="M891.6 545.8H893.4L896 543.4V552L893.4 549.6H891.6Z" fill="none" stroke="#202020" stroke-width="0.8" stroke-linejoin="round"/><path d="M897.8 545.6Q899 547.7 897.8 549.8" fill="none" stroke="#202020" stroke-width="0.8"/><path d="M899.6 544Q901.8 547.7 899.6 551.4" fill="none" stroke="#b0b0b8" stroke-width="0.8"/><rect x="907.2" y="544.4" width="9.6" height="6.4" rx="1.4" fill="none" stroke="#202020" stroke-width="0.9"/><rect x="908.6" y="545.8" width="4.4" height="3.6" rx="0.5" fill="#202020"/><path d="M917.6 546.4V548.8" stroke="#202020" stroke-width="1" stroke-linecap="round"/><path d="M981.4 550.8Q982.8 549.4 982.8 546.2Q982.8 543 985.8 543Q988.8 543 988.8 546.2Q988.8 549.4 990.2 550.8Z" fill="#0a5cc0"/><path d="M984.6 551.6Q985.8 553.2 987 551.6Z" fill="#0a5cc0"/></svg><span class="tx" style="left:847.6px;top:10.2px;font-size:7.9px">HUN</span><span class="tx" style="left:926.6px;top:4px;width:45px;text-align:right">16:35</span><span class="tx" style="left:916.6px;top:15.2px;width:55px;text-align:right;font-size:7.5px">2023. 12. 12.</span></div>
</body></html>
